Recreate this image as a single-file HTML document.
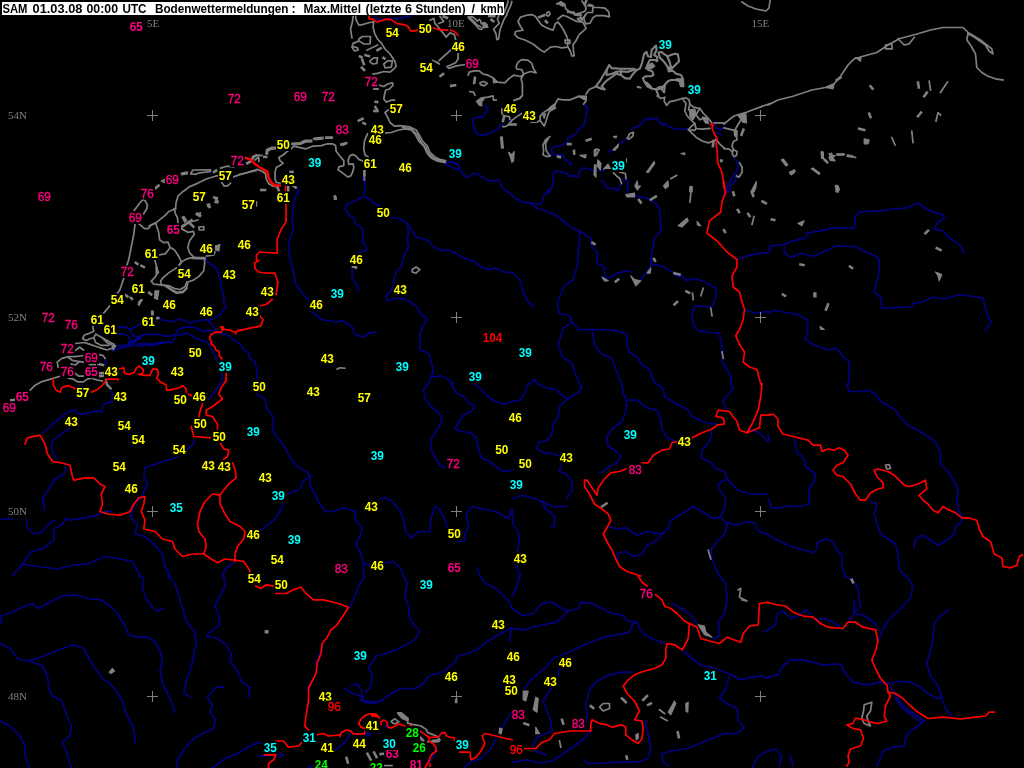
<!DOCTYPE html>
<html><head><meta charset="utf-8"><title>Bodenwettermeldungen</title>
<style>
html,body{margin:0;padding:0;background:#000;overflow:hidden}
svg{display:block}
.n{font-family:"Liberation Sans",Arial,sans-serif;font-weight:bold;font-size:12.6px}
.t{font-family:"Liberation Sans",Arial,sans-serif;font-weight:bold;font-size:12.6px;fill:#000}
.g{font-family:"Liberation Serif","Times New Roman",serif;font-size:11px;fill:#808080}
.l{fill:none;stroke-width:1.7;stroke-linejoin:round;stroke-linecap:square}
</style></head><body>
<svg width="1024" height="768" viewBox="0 0 1024 768">
<rect width="1024" height="768" fill="#000"/>
<g class="l" stroke="#000080">
<polyline points="375.6,15.2 376.2,19 380,20 390,19 400,18.4 411.9,15.5"/>
<polyline points="363.8,175.6 363.1,178.8 365,180.6"/>
<polyline points="445,162.5 452.5,161.9 458.1,164.4 459.4,168.8 465,176.2 468,177.5"/>
<polyline points="445,163.8 452.5,167.5 457.5,170"/>
<polyline points="584.9,104.6 588,110"/>
<polyline points="485.5,105.9 488,109.6"/>
<polyline points="608.5,152.2 612.2,149.8"/>
<polyline points="619.1,144.1 626.6,138.5"/>
<polyline points="631.6,129.8 633.5,127.9 639.8,125.4 644.1,120.4 647.2,118.5 652.2,119.1 656.6,117.9 658.5,121 662.2,124.8 666,124.1 669.8,127.2 676,129.1 683.5,129.5 687.9,128.8"/>
<polyline points="599.1,171 604.8,169.8"/>
<polyline points="601.6,181 604.1,182.2 605.4,186 608.5,188.5 613.5,187.9 616.6,191 619.1,189.1 620.4,184.8"/>
<polyline points="623.5,179.8 627.9,181 627.2,192"/>
<polyline points="714.8,124.1 716,128.5 719.8,129.8 724,127.2"/>
<polyline points="716.6,132.2 721,134.8"/>
<polyline points="734.6,157.2 736.5,161 738.4,164.8 736.5,171 733.4,176 730.2,181 726.5,187.2 727.1,192"/>
<polyline points="737.1,174.8 735.2,181 730.9,184.8 728.4,192"/>
<polyline points="205,257.5 208.8,263.2 215,267 220,277 221.2,287 223.8,297 224,300"/>
<polyline points="296.2,186.9 298.1,190 298.8,192.5"/>
<polyline points="363.8,175.6 363.1,180"/>
<polyline points="297.2,192 293.5,204.5 292.2,217 293.5,229.5 288.5,242 289.8,257 293.5,272 296,284.5 303.5,294.5 309.8,302"/>
<polyline points="312.2,312 321,319.5 336,322 343.5,320.8 352.2,327 354.8,334.5 363.5,337 368.5,333.2 376,332"/>
<polyline points="352.2,268.2 352.2,278.2 356,283.2 358.5,290.8"/>
<polyline points="391,217 401,219.5 407.2,223.2 408.5,232 407.2,239.5 408.5,247 403.5,257 401,267 396,272 393.5,282 391,290.8 386,295.8 387.2,300.8 396,298.2 406,299.5 416,305.8 421,314.5 427.2,319.5 422.2,327 419.8,334.5 419.8,349.5 428.5,353.2 431,360.8 433.5,372 431,377 428.5,384"/>
<polyline points="407.2,223.2 416,237 428.5,240.8 433.5,247 441,250.8 447.2,249.5 456,253.2 463.5,258.2 473.5,260.8 481,267 488.5,269.5 496,268.2 503.5,272 512,272.5"/>
<polyline points="431,377 441,375.8 448.5,379.5 453.5,384"/>
<polyline points="507.2,192 512,194.5"/>
<polyline points="512,195.8 522,202 530.8,203.2 537,208.2 545.8,210.8 557,215.8 564.5,222 572,228.2 579.5,230.8 590.8,238.2 592,247 597,252 597,263.2 604.5,267 604.5,275.8 608.2,278.2 617,273.2 627,270.8 630.8,272"/>
<polyline points="640.8,279.5 647,272 650.8,265.8 652,262"/>
<polyline points="530.8,203.2 540.8,204.5 544.5,194.5 549.5,192"/>
<polyline points="625.8,194.5 634.5,195.8 647,198.2 655.8,203.2 659.5,209.5 660.8,224.5 660.8,230.8 654.5,238.2 652,252 650.8,262 652,264.5 662,265.8 672,272 678.2,277 682,275.8 687,280.8 694.5,278.2 704.5,282 715.8,288.2 715.8,297 712,307 694.5,305.8 692,314.5 693.2,324.5 698.2,330.8 709.5,332.5 719.5,333.2 720.8,342 723.2,352 722,362 727,369.5 730.8,377 730.8,384"/>
<polyline points="579.5,230.8 579.5,242 578.2,254.5 577,267 573.2,279.5 564.5,285.8 559.5,297 557,304.5 559.5,313.2 569.5,315.8 572,322 578.2,329.5 592,329.5 604.5,329.5 617,330.8 627,334.5 627,344.5 629.5,352 637,357 642,364.5 649.5,369.5 652,377 655.8,384"/>
<polyline points="572,322 563.2,328.2 558.2,344.5 562,357 572,363.2 575.8,374.5 579.5,384"/>
<polyline points="592,329.5 594.5,344.5 602,354.5 612,358.2 615.8,369.5 622,384"/>
<polyline points="512,272 519.5,279.5 523.2,292 528.2,302 533.2,306.5"/>
<polyline points="529.5,384 534.5,379.5 538.2,384"/>
<polyline points="738.2,259.5 747,255.8 759.5,253.2 768,253.2"/>
<polyline points="745.8,309.5 754.5,313.2 768,311.5"/>
<polyline points="724.5,192 723.2,197"/>
<polyline points="768,253.2 770.5,245.8 784.2,244.5 793,240.8 805.5,238.2 806.8,233.2 820.5,230.8 833,228.2 854.2,228.2 855.5,217 859.2,212 880.5,210.8 893,209 905.5,208.2 918,203.2 925.5,208.2 933,212 943,214.5 944.2,218.2 938,222 934.2,229.5 943,230.8 948,237 954.2,240.8 960.5,245.8 964.2,253.2"/>
<polyline points="784.2,244.5 784.2,252 790.5,257.5 800.5,253.2 813,256.5 823,252 836.8,245.8 855.5,246.5 863,250.8 873,254.5 879.2,259 879.2,272 876.8,282 874.2,292 880.5,297 881.8,308.2 898,307.5 911.8,307 913,303.2 923,302 931.8,297 943,299 960.5,294.5 973,296.5 983,298.2 985.5,308.2 988,317 991.2,322 985.5,330"/>
<polyline points="768,313.2 774.2,310 785.5,312.5 798,314.5 806.8,319.5 808,328.2 805.5,339.5 813,344.5 828,350 835.5,348.2 843,355.8 849.2,362 849.2,374.5 848.5,384"/>
<polyline points="66.2,466.5 63.8,474 53.8,480.2 48.8,489 42.5,499 45,510.2"/>
<polyline points="220,384 215,391.5 208.8,399"/>
<polyline points="195,440.2 191.2,446.5 183.8,452.8 175,457.8 162.5,461.5 152.5,465.2 145,467.8 143.8,476.5 147.5,484 143.8,491.5 142.5,496.5 136.2,501.5 132.5,509 130,516.5 137.5,524 135,534 145,536.5 156.2,546.5 162.5,554 165,566.5 170,576"/>
<polyline points="1.2,519 12.5,519"/>
<polyline points="26.2,519 27.5,527.8 33.8,534 42.5,531.5 50,522.8 55,520.2"/>
<polyline points="66.2,517.8 62.5,524 53.8,529 53.8,540.2 42.5,549 31.2,551.5 22.5,564 12.5,576"/>
<polyline points="66.2,517.8 70,520.2 85,517.8 97.5,515.2 105,511.5 111.2,511.5"/>
<polyline points="22.5,564 37.5,566.5 57.5,569 72.5,565.2 87.5,564 105,556.5 120,559 132.5,561.5 140,576"/>
<polyline points="235,561.5 225,569 222.5,576"/>
<polyline points="256,394 264.8,399 267.2,409 272.2,415.2 273.5,424 272.2,430.2 278.5,439 286,449 289.8,457.8 297.2,466.5 306,471.5 309.8,475.2 309.8,484 313.5,491.5 318.5,501.5 326,511.5 333.5,511.5 343.5,507.8 352.2,510.2 356,511.5"/>
<polyline points="379.8,499 386,497.8 393.5,502.8 399.8,510.2 403.5,519 406,531.5 411,537.8 418.5,531.5 429.8,531.5 431,519 434.8,506.5 438.5,507.8 443.5,516.5 447.2,526.5"/>
<polyline points="354.8,511.5 356,521.5 362.2,527.8 359.8,536.5 356,544 361,554 363.5,564 363.5,576"/>
<polyline points="309.8,475.2 302.2,482.8 299.8,489 288.5,494"/>
<polyline points="283.5,501.5 281,509 274.8,519 267.2,525.2 261,530.2"/>
<polyline points="363.5,564 371,565.2 386,562.8 393.5,561.5 401,569 403.5,576"/>
<polyline points="428.5,384 423.5,389 424.8,397.8 431,406.5 439.8,414 442.2,421.5 436,431.5 431,439 431,449 436,459 439.8,465.2 446,467.8"/>
<polyline points="451,384 456,392.8 463.5,396.5 468.5,402.8 474.8,406.5 471,411.5 463.5,415.2 458.5,422.8 454.8,429 461,431.5 471,432.8 476,437.8 478.5,449 481,457.8 489.8,461.5 497.2,467.8 503.5,471.5 512,470.2"/>
<polyline points="474.8,384 481,389 487.2,396.5 496,401.5 503.5,404 512,401.5"/>
<polyline points="512,509 508.5,519 496,511.5 482.2,509 472.2,506.5 466,514 468.5,526.5 464.8,534 464.8,541.5 458.5,541.5"/>
<polyline points="477.2,567.8 479.8,576"/>
<polyline points="512,401.5 519.5,400.2 524.5,394 528.2,384"/>
<polyline points="538.2,384 545.8,387.8 555.8,389 562,395.2 567,399 578.2,392.8 582,386.5 579.5,384"/>
<polyline points="567,399 559.5,406.5 558.2,416.5 553.2,424 552,434 547,440.2 538.2,442.8 537,449 544.5,452.8 554.5,454 559.5,456.5"/>
<polyline points="560.8,465.2 559.5,471.5 565.8,474 572,481.5 572,491.5 568.2,495.2 567,499"/>
<polyline points="512,499 522,495.2 532,497.8 542,501.5 552,506.5 562,506.5 567,506"/>
<polyline points="542,501.5 545.8,509 554.5,516.5 554.5,526.5 550.8,526.5"/>
<polyline points="512,509 513.2,524 518.2,531.5 519.5,541.5 517,551.5"/>
<polyline points="517,566.5 520.8,576"/>
<polyline points="622,384 623.2,394 627,400.2 625.8,411.5 622,421.5 612,429 607,436.5 608.2,446.5 617,451.5 620.8,456.5 617,462.8 609.5,466.5 600.8,472.8"/>
<polyline points="627,400.2 637,400.2 647,407.8 657,410.2 660.8,419 662,429 667,437.8 675.8,441.5"/>
<polyline points="657,384 663.2,389 664.5,396.5 674.5,402.8 687,409 692,416.5 702,421.5 712,424 717,424"/>
<polyline points="732,384 733.2,389 724.5,397.8 723.2,401.5 727,410.2"/>
<polyline points="712,431.5 709.5,441.5 702,450.2 700.8,457.8 712,462.8 714.5,467.8 724.5,471.5 728.2,480.2 732,484 738.2,490.2 749.5,494 759.5,494 768,494"/>
<polyline points="749.5,429 759.5,432.8 768,441.5"/>
<polyline points="608.2,526.5 617,529 625.8,527.8 637,535.2 647,531.5 662,534 668.2,529 670.8,520.2 682,514 693.2,506.5 702,511.5 712,517.8 719.5,517.8 724.5,509 725.8,499 719.5,489 718.2,484 727,479"/>
<polyline points="722,517.8 727,525.2 724.5,534 717,541.5 710.8,550.2 712,559 715.8,569 719.5,576"/>
<polyline points="727,522.8 737,525.2 747,521.5 754.5,522.8 757,529 762,532.8 768,534"/>
<polyline points="662,534 657,540.2 647,545.2 642,554 634.5,556.5 624.5,551.5 617,554 618.2,559"/>
<polyline points="846.8,384 849.2,391.5 860.5,391.5 868,390.2 875.5,394 880.5,401.5 888,405.2 895.5,410.2 900.5,417.8 908,425.2 918,430.2 928,436.5 935.5,441.5 940.5,454 940.5,464 948,471.5 954.2,481.5 958,489 956.8,501.5 958,509 961.8,516.5 961.8,521.5 955.5,526.5 954.2,534 946.8,540.2 938,545.2 930.5,540.2 923,535.2 915.5,539 913.8,547.8"/>
<polyline points="794.2,439 796.8,451.5 804.2,459 805.5,466.5 815.5,474 814.2,481.5 809.2,489 809.2,504 800.5,506.5 788,506 778,507.8 771.8,507.8 768,497.8"/>
<polyline points="870.5,501.5 876.8,504 874.2,514 878,526.5 880.5,534 888,539 895.5,544 898,554 899.2,569 905.5,576"/>
<polyline points="768,535.2 778,540.2 788,545.2 800.5,549 813,552.8 816.8,549 816.8,542.8 825.5,539 833,541.5 836.8,550.2 841.8,555.2 841.8,566.5 845.5,576"/>
<polyline points="768,435.2 769.2,440.2"/>
<polyline points="1.2,623.5 1.2,616 12.5,612.2 25,606 32.5,603.5 37.5,608.5 52.5,601 62.5,596 75,594.8 87.5,598.5 101.2,599.8 110,606 117.5,613.5 123.8,623.5 128.8,634.8 137.5,637.2 147.5,637.2 155,641 160,651 162.5,661 160,671 162.5,683.5 167.5,693.5 172.5,704.8 175,712.2"/>
<polyline points="0,643.5 10,648.5 17.5,658.5 25,661 37.5,658.5 50,653.5 62.5,648.5 73.8,644.8 83.8,648.5 88.8,658.5 96.2,669.8 102.5,678.5 110,683.5 116.2,691 122.5,701 126.2,713.5 132.5,726 135,736 135,742.2"/>
<polyline points="30,661 42.5,666 47.5,676 48.8,688.5 52.5,696 61.2,699.8 66.2,713.5 71.2,726 70,736 62.5,742.2 66.2,751 71.2,768"/>
<polyline points="0,721 10,726 20,736 25,746 25,756 30,768"/>
<polyline points="138.8,576 143.8,578.5 142.5,588.5 146.2,598.5 152.5,607.2 157.5,611 162.5,608.5"/>
<polyline points="167.5,576 175,583.5 178.8,596 182.5,608.5 186.2,621 195,632.2 196.2,643.5 193.8,653.5 191.2,668.5 186.2,681 183.8,693.5 190,697.2"/>
<polyline points="223.8,576 225,586 220,596 215,606 218.8,616 220,624.8 212.5,629.8 206.2,636 217.5,638.5 226.2,644.8 231.2,653.5 230,661 237.5,671 241.2,681 248.8,687.2 250,697.2"/>
<polyline points="223.8,687.2 216.2,687.2 207.5,697.2 212.5,704.8 210,712.2 215,719.8 213.8,728.5 202.5,733.5 192.5,739.8 183.8,749.8 177.5,759.8 176.2,768"/>
<polyline points="212.5,768 225,758.5 237.5,753.5 247.5,747.2 256,743.5"/>
<polyline points="364.8,576 358.5,586 354.8,596 349.8,607.2"/>
<polyline points="403.5,576 407.2,583.5 404.8,596 408.5,607.2 409.8,618.5 414.8,626 419.8,631 414.8,639.8 406,644.8 396,649.8 386,653.5 376,656 373.5,661 368.5,667.2 372.2,676 371,686 366,692.2"/>
<polyline points="344.8,688.5 352.2,693.5 361,696 363.5,701 373.5,702.2 381,701 391,693.5 401,688.5 416,688.5 423.5,683.5 428.5,676 441,672.2 446,669.8 456,661 457.2,656 468.5,653.5 478.5,648.5 486,642.2 496,636 506,631 512,627.2"/>
<polyline points="351,686 357.2,683.5 361,689.8 363.5,698.5"/>
<polyline points="322.2,643.5 319.8,653.5 316,663.5"/>
<polyline points="312.2,681 307.2,688.5"/>
<polyline points="479.8,576 486,583.5 496,588.5 503.5,596 509.8,602.2 512,608.5"/>
<polyline points="511,628.5 509.8,641"/>
<polyline points="512,711 506,721 502.2,728.5"/>
<polyline points="349.8,733.5 346,741 338.5,747.2 333.5,751"/>
<polyline points="256,743.5 261,742.2"/>
<polyline points="258.5,756 266,756 276,753.5 283.5,754.8 279.8,757.2"/>
<polyline points="367.2,732.2 368.5,736"/>
<polyline points="436,748.5 433.5,756 428.5,763.5"/>
<polyline points="496,738.5 491,748.5 481,758.5 468.5,763.5 463.5,768"/>
<polyline points="308.5,768 316,764.8"/>
<polyline points="519.5,576 517,586 512,596"/>
<polyline points="512,608.5 523.2,616 533.2,613.5 542,603.5 552,602.2 559.5,607.2 568.2,611 578.2,608.5 580.8,602.2 592,603.5 599.5,607.2 612,613.5 622,614.8 628.2,621 637,622.2 639.5,628.5 644.5,634.8 654.5,639.8 664.5,643.5"/>
<polyline points="512,628.5 524.5,629.8 537,626 557,622.2 568.2,611"/>
<polyline points="524.5,688.5 532,678.5 544.5,668.5 553.2,658.5 572,651 587,643.5 604.5,637.2 617,634.8 629.5,632.2 632,624.8 637,622.2"/>
<polyline points="559.5,669.8 555.8,681 549.5,691 543.2,701 547,711 550.8,721 552,731 537,737.2 533.2,746 534.5,751 545.8,754.8"/>
<polyline points="632,672.2 622,672.2 609.5,674.8 597,681 589.5,689.8 585.8,703.5 587,716 585.8,723.5"/>
<polyline points="590.8,731 584.5,738.5 574.5,746 562,754.8 552,761 539.5,763 527,759.8 512,762.2"/>
<polyline points="644.5,721 648.2,733.5 650.8,748.5 648.2,758.5 637,762.2 619.5,762.2 599.5,763.5 587,763.5 584.5,759.8"/>
<polyline points="719.5,576 725.8,583.5 727,601 724.5,613.5 718.2,622.2 719.5,636 714.5,638.5"/>
<polyline points="672,603.5 679.5,607.2 689.5,613.5 697,623.5"/>
<polyline points="682,649.8 692,658.5 702,666 712,667.2 724.5,672.2 732,674.8 739.5,679.8 752,677.2 762,676 768,678.5"/>
<polyline points="729.5,676 725.8,688.5 719.5,698.5 727,703.5 737,708.5 738.2,721 744.5,727.2 737,733.5 724.5,733.5 712,738.5 699.5,743.5 687,748.5 672,751 662,753.5 663.2,762.2 668.2,766"/>
<polyline points="768,751 758.2,756 752,768"/>
<polyline points="763.2,632.2 768,629.8"/>
<polyline points="768,629.8 775.5,624.8 778,613.5 783,611 790.5,618.5 798,616 806.8,609.8 810.5,614.8"/>
<polyline points="845.5,576 853,581 858,588.5 859.2,601 860.5,607.2 854.2,612.2 854.2,601"/>
<polyline points="854.2,613.5 848,622.2"/>
<polyline points="818,619.8 825.5,618.5 833,622.2 839.2,626"/>
<polyline points="854.2,613.5 863,614.8 870.5,619.8 875.5,623.5 876.8,629.8"/>
<polyline points="906.8,576 913,586 910.5,597.2 903,606 895.5,613.5 888,621 883,628.5 879.2,638.5"/>
<polyline points="768,677.2 778,674.8 783,666 790.5,659.8 800.5,659.8 813,662.2 821.8,664.8 840.5,664 845.5,673.5 853,682.2 868,684.8 879.2,682.2 888,683.5 900.5,681 910.5,682.2 920.5,687.2 928,693.5 938,698.5 941.8,697.2"/>
<polyline points="948,609.8 940.5,616 934.2,623.5 933,638.5 930.5,651 926.8,663.5 930.5,676 938,686 941.8,698.5 945.5,708.5 951.8,716"/>
<polyline points="888,683.5 895.5,693.5 900.5,703.5 908,709.8 918,716 924.2,721 918,726 910.5,731 905.5,738.5 904.2,746 893,747.2 883,751 879.2,761 876.8,766"/>
<polyline points="895.5,698.5 903,708.5 913,716 920.5,722.2"/>
<polyline points="768,751 775.5,748.5 781.8,756 779.2,766"/>
<polyline points="790.5,756 793,766"/>
<polyline points="360.6,700 365,702.5 375,703.1 382.5,700"/>
<polyline points="365.6,733.8 368.8,736.2 370.6,732.8"/>
<polyline points="384.4,724.4 386.9,727.5"/>
<polyline points="485.5,105.4 488,107.9 486.8,111.6 484.2,114.1 483,117.2 478,117.2 473,118.5 473,123.5 474.9,129.8 476.8,133.5 480.5,134.8 486.8,134.8 491.8,131.6 497.4,129.8 500.5,124.8 503,125.4"/>
<polyline points="508.6,119.8 509.9,121"/>
<polyline points="584.9,104.8 588,108.5 586.1,114.8 584.9,121 583.6,126 578.6,129.1 574.9,134.8 568,137.9 567.4,142.2 560.5,146 555.5,146 551.1,149.8 552.4,154.1 558,154.8 563,154.8 564.9,159.8 570.5,162.9 570.5,165.4"/>
<polyline points="594.2,171 588,168.5 583,167.9 579.2,171 578,177.2 574.2,175.4 569.2,176.6 567.4,173.5 560.5,171.6 555.5,171 552.4,174.8 553.6,182.2 551.8,188.5 546.8,192"/>
<polyline points="468,177.2 471.8,174.1 476.8,173.5 481.8,176.6 486.8,179.8 492.4,181 498,179.8 501.1,183.5 501.8,187.2 505.5,190.4 508,192"/>
<polyline points="105,359.4 105.9,364.1"/>
<polyline points="111.6,390.3 112.5,396.9 111.6,401.6 105,403.4 102.2,407.2 102.2,411.9 95.6,410.9 90,412.8 82.5,413.8 77.8,413.8 75.9,410 68.4,411.9 61.9,416.6 54.4,422.2 48.8,427.8 42.2,433.4"/>
<polyline points="69.4,428.8 61.9,433.4 54.4,439.1 51.6,443.8 52.5,451.2 56.2,458.8"/>
<polyline points="365,180 365,187.5 363.8,196.2 370,199.4 373.1,203.1 379.4,205.6"/>
<polyline points="363.8,196.2 357.5,200 351.2,202.5 346.2,205 345.6,209.4 348.8,215 353.8,218.1 355,223.1 360,226.2 363.1,230 362.5,240 365,245 366.9,250 360,251.9"/>
<polyline points="118.2,326.9 125.8,326.9 129.5,329.4 134.5,327.5 140.1,324.4"/>
<polyline points="158.2,316.9 161.4,320 167,320.6 173.2,321.9 179.5,318.8 184.5,320.6 189.5,323.1 194.5,321.9 200.8,320 207,320 210.8,320 215.8,316.9 220.8,313.8 223.2,310 225.8,306.9 223.9,302.5 223.9,300"/>
<polyline points="208.2,320.6 212,325 215.8,329.4 213.2,331.2 208.2,330 204.5,331.9 199.5,329.4 194.5,327.5 189.5,326.9 183.2,327.5 178.2,329.4 176.4,333.8 172,335.6 167,336.2 159.5,335 153.2,334.4 147,334.4 140.8,335.6 137,336.9 133.2,336.2 130.8,331.2 129.5,329.4"/>
<polyline points="118.2,333.8 124.5,333.8 128.2,336.2 130.8,340 129.5,343.1"/>
<polyline points="215.8,330 219.5,333.1 223.9,333.8 229.5,335.6 232.6,339.4 237,341.9 240,343.8"/>
<polyline points="240,343.8 243.8,349.5 249,353.4 250,359 254.7,361 256.6,369.4 257.5,378.8"/>
<polyline points="112,346.2 119.5,345.6 128.2,345 134.5,343.1 137,340 140.8,336.9"/>
<polyline points="129.5,343.1 140.1,338.1" stroke-width="3"/>
<polyline points="138.9,343.8 144.5,343.8 153.2,343.8 159.5,342.5 167,341.9 172,342.5 174.5,338.8 176.4,335.6 182,334.4 187,333.1 192,335.6 197,338.8 202,340.6 205.8,341.2 209.5,344.4 212,350 214.5,355 217,360 218.2,361.9"/>
<polyline points="112,351.2 117,348.8 123.2,347.5 129.5,346.2 137,345 142,346.2 148.2,345 154.5,345.6 158.2,344 163.2,343.1 167,342.5"/>
<polyline points="219,367 221,372 222.5,377 221,384"/>
</g>
<g class="l" stroke="#808080">
<polyline points="353.1,16.8 352.5,21.5 350.6,29 351.9,37.8"/>
<polyline points="355.6,16.5 356.2,20.2 358.8,25.2 362.5,24.6 368.8,22.8 373.8,21.5 373.1,26.5 374.4,32.8 377.5,39 381.2,42.8 385,49 390,54 395,61.5 396.2,66.5 393.8,69 390,72.1 383.8,71.5 377.5,73.4 373.1,74"/>
<polygon points="358.8,39 362.5,36.5 370.6,36.5 370,44 363.8,44 358.8,40.9"/>
<polyline points="358.8,40.9 353.1,43.4 351.9,47.1 354.4,50.9 358.1,50.2 357.5,47.8 353.8,46.8"/>
<polyline points="366.9,50.2 377.5,45.2"/>
<polyline points="377.5,50.2 380.6,48.4" stroke-width="2.6"/>
<polyline points="360,56.5 361.5,57.1" stroke-width="2.6"/>
<polyline points="365.6,55.2 368.8,56.2" stroke-width="2.6"/>
<polyline points="383.5,57.8 384.4,58.4" stroke-width="2.6"/>
<polyline points="362.2,59.6 363.8,64" stroke-width="2.6"/>
<polyline points="361.9,67.8 364.4,70.2 363.1,69" stroke-width="2.6"/>
<polygon points="370,60.9 373.8,57.8 377.5,57.8 376.9,63.4 373.1,64 370,62.1"/>
<polygon points="383.8,64 387.5,60.9 392.5,60.9 391.2,67.1 385,67.8"/>
<polyline points="379.4,85.2 383.8,86.5 387.5,84 392.5,82.8 393.1,85.2 389.4,89 385.6,90.2 384.4,95.2 383.8,99 386.2,102.1 391.2,100.2 394.4,100.2"/>
<polyline points="374.4,88.6 377.5,88.6" stroke-width="2.6"/>
<polyline points="375.6,101.9 377.2,102.1" stroke-width="2.6"/>
<polyline points="375.4,107.1 376.6,109" stroke-width="2.6"/>
<polyline points="430,20.2 433.8,18.4 435,23.4 438.8,27.8 446.2,37.1 450,32.8 454.4,34.6 455.6,39.6"/>
<polyline points="440,16.5 443.8,21.5 438.8,23.4"/>
<polyline points="443.8,16.5 446.9,17.8" stroke-width="2.6"/>
<polyline points="439.4,60.2 450.6,50.2"/>
<polyline points="433.1,60.5 439.4,64 437.5,62.1"/>
<polyline points="458.1,53.4 458.1,59 455.6,62.8 450,65.2 446.9,66.5 448.8,68.4 456.2,65.9 465,64.6"/>
<polyline points="440.6,75.9 443.1,74" stroke-width="2.6"/>
<polyline points="451.2,85.9 455,85.2" stroke-width="2.6"/>
<polyline points="388.1,110 385,112.5 387.5,116.9 390,122.5 394.4,126.2 400,125.6 410,126.9 416.2,130 420,136.2 422.5,141.2 427.5,146.2 430,152.5 435,156.9 440,159.4 445.6,160.6"/>
<polyline points="385,133.1 391.2,132.5 398.8,130 405,128.8 411.2,130 415.6,135 418.8,141.2 423.8,146.2 427.5,153.8 431.2,158.1 437.5,161.2 445,162.5"/>
<polyline points="402.5,127.5 411.2,128.5 417.5,135 421.2,142.5 426.2,147.5 428.8,153.8 433.8,158.1 440,160.6 445,161.5"/>
<polyline points="358.8,120.6 362.5,118.8" stroke-width="2.6"/>
<polyline points="363.5,123.1 365,123.8" stroke-width="2.6"/>
<polyline points="374.4,111 377.5,111" stroke-width="2.6"/>
<polyline points="341.2,144.4 346.2,143.1" stroke-width="2.6"/>
<polyline points="364.4,170 364.4,180"/>
<polyline points="499.2,15.2 497.4,19 499.2,23.4 493.6,29 496.1,34 496.8,39.6 498.6,39 499.9,30.2 503.6,20.2 506.8,14.6"/>
<polygon points="526.8,15.2 520.5,17.1 518,21.5 520.5,26.5 523,30.2 515.5,31.5 514.9,34.6 518,37.8 525.5,40.2 533,44 539.2,49 544.2,52.1 550.5,47.1 555.5,46.5 561.8,47.8 567.4,47.1 568,40.9 566.8,36.5 563,29 560.5,25.2 558,22.1 555.5,23.4 554.2,27.1 553,30.2 548,28.4 541.8,25.2 538,20.2 535.5,16.5 531.8,14.6"/>
<polyline points="539.2,17.1 544.2,15.2" stroke-width="2.6"/>
<polyline points="545.8,21.2 547,22.5" stroke-width="2.6"/>
<polyline points="558,19 561.1,16.5 563,15.2 566.8,16.5 571.8,19 576.8,21.5 583,22.1 586.1,28.4 579.2,34.6 575.5,41.5 573,44.6 573.6,51.5 574.2,55.9 571.8,55.9 570.5,51.5 568,47.1"/>
<polygon points="564.9,40.2 569.9,40.2 569.9,43.4 565.5,43.4"/>
<polyline points="575.5,14.6 580.5,15.2" stroke-width="2.6"/>
<polyline points="578,19 583,17.8 585.5,15.2"/>
<polygon points="516.8,69 516.1,66.5 518,62.1 521.8,59.6 528,60.2 531.8,63.4 533.6,69 536.1,72.8 530.5,71.5 526.8,72.8 523.6,74 521.8,69.6"/>
<polyline points="468,75.2 469.2,72.1 474.2,70.9 479.2,70.9 483,74 488,75.2 493,77.8 497.4,82.1 504.9,82.8 509.2,78.4 513.6,75.2 520.5,76.5 523.6,74.6"/>
<polyline points="523,75.2 521.1,79 522.4,84 522.4,95.2 519.9,98.4 514.2,100.2"/>
<polygon points="493,77.8 497.4,82.1 493.6,82.8" fill="#808080" stroke-width="1.2"/>
<polyline points="474.9,77.8 474.2,82.8" stroke-width="2.6"/>
<polygon points="479.9,82.8 483.6,81.5 487.4,83.4 484.2,85.9 480.5,84.6"/>
<polyline points="469.9,91.5 473.6,92.1 474.9,95.2"/>
<polyline points="476.8,101.5 481.8,97.8 488,97.1 493,95.9 493.6,100.2 496.1,100.2"/>
<polygon points="476.8,101.5 481.8,97.8 484.2,99 481.8,101.5 481.8,105.9 479.2,105.2" fill="#808080" stroke-width="1.2"/>
<polyline points="586.1,94 589.2,89.6 596,86.5"/>
<polygon points="596,86.2 599.8,81.2 603.5,75 606.6,70 609.1,65 611.6,68.1 621,68.8 633.5,68.8 636.6,70 632.2,75 629.8,78.8 624.8,78.1 621,75 616,73.8 611,77.5 606,81.2 601.6,86.2 604.8,89.4 601,88.8" stroke-width="2.1"/>
<polyline points="606.6,70 606.6,75 612.2,73.8 616,71.9 621,71.2 621,75" stroke-width="2.1"/>
<polyline points="621,71.2 627.2,71.9 633.5,70" stroke-width="2.1"/>
<polyline points="636.6,70 639.8,68.8 642.2,62.5 644.1,53.8 646.6,51.9 647.9,56.2 651,56.9 651.6,50 656,45.6 656.6,50 654.1,55 657.2,56.9 657.2,61.2 654.8,60 649.8,60 648.5,62.5 646,68.1 648.5,70 652.2,71.2 653.5,75 651,76.2 646,76.2 642.9,78.1 644.1,81.2 647.2,86.2 652.2,88.8 657.2,89.4 661,88.1 663.5,86.2 667.9,81.2 671,80 676,80 679.8,81.2 681,86.2 683.5,86.2 682.9,78.8 681,75 676,73.8 673.5,71.2 669.8,70 672.2,68.1 679.1,61.2 677.9,54.4 674.8,53.8 667.2,56.2 661,51.9 658.5,52.5 659.8,57.5 663.5,61.2 667.2,66.2 669.8,70" stroke-width="2.1"/>
<polygon points="646,68.1 649.1,64.4 652.2,63.1 654.8,66.2 651,68.8" fill="#808080" stroke-width="1.2"/>
<polygon points="676,78.8 682.9,78.8 683.5,86.2 681,86.2 679.1,81.2" fill="#808080" stroke-width="1.2"/>
<polygon points="644.1,81.2 647.2,86.2 652.2,88.8 651,86.2 647.2,82.5" fill="#808080" stroke-width="1.2"/>
<polygon points="657.2,87.5 661,86.2 664.1,87.5 661,89.4" fill="#808080" stroke-width="1.2"/>
<polygon points="667.2,67.5 671,66.2 672.2,71.2 668.5,71.9" fill="#808080" stroke-width="1.2"/>
<polyline points="661,88.1 664.1,92.5 664.8,86.2" stroke-width="2.1"/>
<polyline points="656,89.4 658.5,96" stroke-width="2.1"/>
<polyline points="637.9,86.9 640.4,87.5" stroke-width="2.1"/>
<polyline points="667.2,56.2 669.8,62.5 671,66.9" stroke-width="2.1"/>
<polyline points="657.2,96 661,98.5 664.8,97.2 664.1,101 666.6,105.4 669.8,101.6 676,100.4 682.2,98.5 686,97.9 689.1,99.8 689.8,104.1 693.5,107.2 699.8,108.5 703.5,113.5 708.5,118.5 711.6,122.9"/>
<polyline points="682.2,98.5 686,103.5 684.8,111 687.2,116 691,119.8 694.8,123.5 691,126.6 688.5,129.8 691,132.2 696,137.2 702.2,141 708.5,142.9 713.5,141 716.6,139.8"/>
<polygon points="689.8,109.8 694.8,109.1 696,114.8 692.9,119.8 689.8,116" fill="#808080" stroke-width="1.2"/>
<polygon points="702.2,117.2 707.2,117.9 708.5,123.5 705.4,122.9" fill="#808080" stroke-width="1.2"/>
<polyline points="689.8,104.1 688.5,109.8 696,114.8 699.8,108.5"/>
<polyline points="696,114.8 699.8,119.8 703.5,118.5"/>
<polyline points="694.8,123.5 696,128.5 702.2,129.1 709.8,128.5"/>
<polyline points="688.5,129.8 694.8,130.4 696,128.5"/>
<polyline points="714.1,122.9 724,122.9"/>
<polyline points="716,139.1 719.8,144.1 724,147.9"/>
<polyline points="713.5,141 712.9,146" stroke-width="2.6"/>
<polygon points="612.9,149.8 618.5,144.1 617.9,147.2 614.8,150.4" fill="#808080" stroke-width="1.2"/>
<polygon points="627.2,138.5 629.8,133.5 633.5,132.2 632.9,136 629.1,139.1"/>
<polygon points="613.5,136.6 616.6,136 616,137.9" fill="#808080" stroke-width="1.2"/>
<polygon points="681,153.5 684.8,152.9 684.5,154.8" fill="#808080" stroke-width="1.2"/>
<polygon points="720.4,159.8 722.2,159.8 722.2,161.6 720.4,161.6" fill="#808080" stroke-width="1.2"/>
<polygon points="646.6,172.2 654.1,161.6 654.8,163.5 648.5,172.5" fill="#808080" stroke-width="1.2"/>
<polyline points="671,178.5 676.6,175.4"/>
<polygon points="663.5,186 667.9,181 668.5,186 665.4,188.5" fill="#808080" stroke-width="1.2"/>
<polygon points="634.8,186 637.2,181 637.9,186 640.4,186 637.2,189.8" fill="#808080" stroke-width="1.2"/>
<polygon points="689.8,186.6 692.2,186.6 692.2,192 689.8,192" fill="#808080" stroke-width="1.2"/>
<polyline points="596,149.1 599.1,149.8 596.6,154.8"/>
<polygon points="597.9,159.8 601,163.5 600.4,169.8 597.2,166" fill="#808080" stroke-width="1.2"/>
<polygon points="603.5,169.1 607.9,164.1 610.4,168.5 604.8,168.5" fill="#808080" stroke-width="1.2"/>
<polyline points="626.6,158.5 626.6,162.2" stroke-width="1"/>
<polyline points="613.5,172.9 616.6,176 619.8,178.5 621.6,183.5"/>
<polyline points="619.8,172.2 625.4,173.5 626,178.5"/>
<polyline points="724,124.1 729,119.8 734,116 740.2,114.1 746.5,112.2 752.8,109.8 761.5,106.6 770.2,103.5"/>
<polyline points="724,127.9 729,129.1 734.6,130.4 736.5,127.2 740.2,121 742.8,116"/>
<polygon points="737.8,114.8 745.9,113.5 746.5,122.9 742.8,122.2 740.2,118.5" fill="#808080" stroke-width="1.2"/>
<polyline points="734.6,130.4 735.9,134.8 737.1,139.8 733.4,141.6 732.1,146 733.4,149.8"/>
<polygon points="734,130.4 737.1,130.4 737.1,136.6 734.6,136" fill="#808080" stroke-width="1.2"/>
<polyline points="724,148.5 729,149.1 731.5,151"/>
<polygon points="733.4,149.8 737.1,151.6 736.5,155.4 734,156.6 732.1,153.5"/>
<polyline points="739.6,162.9 742.1,167.2 742.1,172.2 739,177.2 736.5,176"/>
<polyline points="743.4,129.8 741.5,134.8" stroke-width="2.6"/>
<polygon points="781.5,159.8 783.4,159.1 787.8,164.8 785.9,165.8" fill="#808080" stroke-width="1.2"/>
<polygon points="790.2,174.1 794.6,170.4 794.6,172.2 791.5,174.8" fill="#808080" stroke-width="1.2"/>
<polygon points="750.9,192 754,186 756.5,181.6 755.9,187.2 754,192" fill="#808080" stroke-width="1.2"/>
<polygon points="821.5,152.2 823.4,152.2 823.4,158.5 821.5,158.5" fill="#808080" stroke-width="1.2"/>
<polyline points="824.6,159.8 827.1,162.2" stroke-width="2.6"/>
<polygon points="829,157.2 831.5,152.9 832.8,156 835.2,155.4 832.1,158.5 835.2,161 830.2,160.4" fill="#808080" stroke-width="1.2"/>
<polyline points="837.1,154.5 844,154.1"/>
<polyline points="847.8,156 852,156.6" stroke-width="2.6"/>
<polygon points="811.5,168.5 813.4,168.2 819.6,172.9 819,174.5" fill="#808080" stroke-width="1.2"/>
<polygon points="835.9,185.4 837.8,185.4 839.6,189.8 837.1,192 835.9,192" fill="#808080" stroke-width="1.2"/>
<polyline points="768,105 778,100 793,96.2 811.8,90 825.5,87.5 834.2,83.8 840.5,76.2 848,65 854.2,58.8 863,56.2 876.8,52.5 888,45 899.2,38.8 918,33.8 930.5,30 943,27.5 963,27.5 968,32.5 980.5,40 991.8,48.8 993,53.8 989.2,51.2 985.5,45 973,36.2 968,33.8"/>
<polyline points="968,33.8 966.8,40 970.5,45 975.5,53.8 976.8,67.5 981.8,72.5 988,76.2 995.5,78.8 1003,80"/>
<polygon points="885.5,45 891.8,43.8 892.2,48.8 885.5,48.8"/>
<polyline points="898,38.8 904.2,45 909.2,43.8 914.2,37.5"/>
<polygon points="855.5,57.5 860.5,61.2 861,57.5" fill="#808080" stroke-width="1.2"/>
<polygon points="825.5,87.5 834.2,83.8 833,88.8" fill="#808080" stroke-width="1.2"/>
<polyline points="836.8,80 840.5,77.5" stroke-width="2.6"/>
<polyline points="870.5,86.2 872.5,88.8" stroke-width="2.6"/>
<polyline points="918,82.5 918.8,87.5" stroke-width="2.6"/>
<polyline points="929.2,81.2 930.5,90"/>
<polyline points="924.2,96.2 926.8,92.5" stroke-width="2.6"/>
<polyline points="940.5,92.5 947.5,82"/>
<polyline points="869.2,113.8 870.5,117" stroke-width="2.6"/>
<polyline points="918,116.2 921,112.5" stroke-width="2.6"/>
<polyline points="936,121.2 938,112.5 940.5,115"/>
<polyline points="859.2,128.8 864.2,130" stroke-width="2.6"/>
<polygon points="864.2,138.8 869.2,140 868,143.8 864.2,143.8" fill="#808080" stroke-width="1.2"/>
<polyline points="891.8,137.5 895,145"/>
<polyline points="911.8,131.2 913,142.5"/>
<polyline points="821.8,152.5 822.5,157.5" stroke-width="2.6"/>
<polyline points="829.2,153.8 834.2,160 830.5,158.8"/>
<polyline points="838,154.5 843,154.5" stroke-width="2.6"/>
<polyline points="848,155 855.5,157.5"/>
<polyline points="781.8,160 786.8,165"/>
<polyline points="790.5,172.5 794.2,170.8" stroke-width="2.6"/>
<polyline points="811.8,168.8 819.2,173.2"/>
<polyline points="835.5,186.2 838,192"/>
<polyline points="134.2,210.6 139.2,203.8 143,199.4 145.5,201.2 147.4,205 146.8,208.8 143.6,213.8"/>
<polyline points="155.5,188.1 158.6,185.6" stroke-width="2.6"/>
<polyline points="165.5,179.4 161.5,181 164.9,182.5"/>
<polygon points="181.1,173.1 187.4,171.9 187.4,173.8 181.8,175" fill="#808080" stroke-width="1.2"/>
<polygon points="190.5,173.8 193,170 210.5,169.8 210.5,171.5 198,173.1 196.1,174.4"/>
<polyline points="214.2,171.9 216.1,170.6" stroke-width="2.6"/>
<polyline points="220.5,168.1 226.8,166.2 233.6,166.9"/>
<polyline points="247.4,163.1 251.1,161.2" stroke-width="2.6"/>
<polyline points="252.4,158.8 254.2,156.2 256,155.6" stroke-width="2.6"/>
<polyline points="175.5,208.8 176.1,202.5 178,196.2 181.8,192.5 189.2,186.9 198,183.1 206.8,178.8 215.5,176.2 218.6,175.6"/>
<polyline points="233.6,176.9 240.5,174.4 248,172.5 256,170.6"/>
<polyline points="221.8,182.5 224.2,186.2 228,185.6 230.5,183.1"/>
<polyline points="175.5,208.8 169.2,211.2 164.2,216.2 158,221.2 153,224.4 149.2,226"/>
<polyline points="174.2,208.8 175.5,213.8 177.4,217.5 178,222.5"/>
<polyline points="214.2,197.5 216.8,198.1" stroke-width="2.6"/>
<polyline points="215.5,201.9 217.4,202.2" stroke-width="2.6"/>
<polygon points="207.4,204.4 209.9,203.8 209.9,206.9 208,206.9" fill="#808080" stroke-width="1.2"/>
<polygon points="196.8,214.4 200.5,212.5 199.9,216.2" fill="#808080" stroke-width="1.2"/>
<polyline points="183,217.5 184.9,221.2" stroke-width="2.6"/>
<polyline points="181.8,226 188,222.5 198,220"/>
<polyline points="188,222.5 193,226"/>
<polyline points="135,224.5 133.8,234.5 131.2,247 128.8,259.5 126.2,267"/>
<polyline points="123.8,278.2 120,289.5 115,297"/>
<polyline points="110,305.8 102.5,314.5"/>
<polyline points="197.5,214 200,215.8" stroke-width="2.6"/>
<polyline points="208,205 209.5,207" stroke-width="2.6"/>
<polyline points="215.5,198.2 217,200.8" stroke-width="2.6"/>
<polygon points="198.8,227 203.8,226.5 203.8,230 199.2,230"/>
<polygon points="215.5,245.8 220,244.5 218.8,250.8 215.5,250" fill="#808080" stroke-width="1.2"/>
<polyline points="135.8,262.8 137.5,264" stroke-width="2.6"/>
<polyline points="141.5,265.8 143.8,267" stroke-width="2.6"/>
<polyline points="149.2,292.8 151.2,294.5" stroke-width="2.6"/>
<polygon points="155,290.8 158.8,290.8 157.5,299.5 154.5,298.2" fill="#808080" stroke-width="1.2"/>
<polyline points="125.8,295.2 127.5,296.5" stroke-width="2.6"/>
<polyline points="130.8,297.8 132,299" stroke-width="2.6"/>
<polyline points="140.8,300.8 139,304" stroke-width="2.6"/>
<polyline points="152.5,312 152.5,315.8" stroke-width="2.6"/>
<polygon points="265.6,153.8 266.5,149.4 271.2,147.2 275.6,147.2 275.6,149 271.2,149.4 268.1,151.2 267.5,154.4" fill="#808080" stroke-width="1.2"/>
<polygon points="291.9,143.1 300,142.5 305,140 311.9,140 311.9,141.9 305.6,142.2 300.6,144.4 291.9,144.8" fill="#808080" stroke-width="1.2"/>
<polygon points="313.1,138.8 315,137.8 323.1,137.2 323.1,139 315.6,140" fill="#808080" stroke-width="1.2"/>
<polygon points="325.6,136.9 332.5,136.9 332.5,138.5 325.6,138.5" fill="#808080" stroke-width="1.2"/>
<polygon points="341.9,144.4 346.2,142.5 346.2,144 342.5,145.6" fill="#808080" stroke-width="1.2"/>
<polyline points="291.2,148.8 293.8,146.2 302.5,148.1 306.2,148.8 312.5,146.2 321.2,145.6 327.5,143.8 332.5,143.8 335.6,145.6 336.2,151.2 340,156.2 343.8,160.6 343.8,165.6 338.8,166.9 338.1,170 341.2,171.9 344.4,174.4 347.5,176.9 350.6,176.2 352.5,172.5 353.8,167.5 353.1,163.8 348.8,164.4 348.1,160 350,155.6 353.1,154.4 356.2,156.2 358.8,159.4 363.1,161.2"/>
<polyline points="287.5,151.2 283.1,155 278.8,157.5 280,160.6 283.1,163.1 280,165.6 276.2,167.5 275,172.5 275,178.8 276.2,182.5 280,183.1"/>
<polyline points="240,174.4 245,173.1 251.2,171.2 257.5,169.4 261.9,171.2 265.6,173.8 266.2,178.8 268.8,183.8 273.1,186.2 277.5,186.9"/>
<polyline points="252.5,156.9 257.5,155 261.9,155.6"/>
<polyline points="255,160 258.8,156.9 258.8,161.2"/>
<polyline points="247.5,163.1 250.6,161.2" stroke-width="2.6"/>
<polyline points="264.4,156.9 266.2,156.9" stroke-width="2.6"/>
<polyline points="290.6,171.9 292.5,171.9" stroke-width="2.6"/>
<polyline points="261.2,190 265,190" stroke-width="2.6"/>
<polygon points="334.4,196.9 336.2,196.9 336.2,199.4 334.4,199.4" fill="#808080" stroke-width="1.2"/>
<polyline points="367.5,133.8 364.4,141.2 363.8,148.8 365,155 368,156.9"/>
<polyline points="288.1,186.2 288.1,190.6" stroke-width="2.6"/>
<polyline points="293.8,186.2 295.6,187.5" stroke-width="2.6"/>
<polyline points="277.5,187.5 278.8,190.6" stroke-width="2.6"/>
<polyline points="364.4,170 364.4,175" stroke-width="2.6"/>
<polyline points="256.2,202.5 256.2,206.2" stroke-width="1"/>
<polyline points="334.8,196.5 335.5,198.5" stroke-width="2.6"/>
<polyline points="256,202.5 256,205" stroke-width="2.6"/>
<polygon points="412.2,269.5 416,267 419.8,269.5 416,273.2 412.2,272"/>
<polyline points="353,266.5 356,267.5" stroke-width="2.6"/>
<polyline points="337.2,369 339.8,367.8 344.8,368.2"/>
<polygon points="625.8,194.5 634.5,193.2 634.5,197 627,197" fill="#808080" stroke-width="1.2"/>
<polyline points="639,200 640.8,202.5" stroke-width="2.6"/>
<polyline points="650.8,199.5 655.8,196.5" stroke-width="2.6"/>
<polyline points="690.8,193.2 690,202"/>
<polyline points="733.2,192.5 734,195" stroke-width="2.6"/>
<polyline points="752,192.5 753.2,195.8" stroke-width="2.6"/>
<polyline points="762.5,201.5 765.8,203.2" stroke-width="2.6"/>
<polygon points="678.2,225.8 687,218.2 688.2,220.8 682,227" fill="#808080" stroke-width="1.2"/>
<polygon points="697,221.5 700.8,225.8 697.5,225" fill="#808080" stroke-width="1.2"/>
<polyline points="737.8,210 739,212" stroke-width="2.6"/>
<polyline points="748.2,214 749.5,216" stroke-width="2.6"/>
<polyline points="754,216.5 752,224.5"/>
<polyline points="724,230.2 725,232" stroke-width="2.6"/>
<polyline points="592.5,242.8 594.5,244" stroke-width="2.6"/>
<polygon points="602,277 608.2,280.8 604.5,280.8" fill="#808080" stroke-width="1.2"/>
<polyline points="615.8,281.5 618.2,279.5" stroke-width="2.6"/>
<polygon points="630.8,275.8 635.8,285.8 640.8,280.8 634.5,279.5" fill="#808080" stroke-width="1.2"/>
<polygon points="647,273.2 650.8,268.2 650.2,273.2" fill="#808080" stroke-width="1.2"/>
<polyline points="654,259 655,260.8" stroke-width="2.6"/>
<polyline points="674.5,273.2 679.5,274.5" stroke-width="2.6"/>
<polyline points="686.5,291.5 689,292.8" stroke-width="2.6"/>
<polyline points="692.5,293.2 693.2,299.5"/>
<polyline points="700.8,295.8 703.2,288.2"/>
<polyline points="674.5,304.5 677,302" stroke-width="2.6"/>
<polyline points="710.8,308.2 712,315.8"/>
<polyline points="722,352 723.2,358.2"/>
<polyline points="771.8,219.5 774.2,220" stroke-width="2.6"/>
<polygon points="798,223.2 804.2,220.8 801.8,225.8" fill="#808080" stroke-width="1.2"/>
<polyline points="800.5,264.5 803.5,265" stroke-width="2.6"/>
<polyline points="850,266.5 852,268" stroke-width="2.6"/>
<polyline points="925.5,233.2 928,230.8" stroke-width="2.6"/>
<polyline points="936.8,248.2 940.5,250" stroke-width="2.6"/>
<polygon points="935.5,272 941.8,274.5 939.2,280.8 938,275.8" fill="#808080" stroke-width="1.2"/>
<polyline points="783,294.5 785,295.8" stroke-width="2.6"/>
<polygon points="813.8,292.8 816,292.8 816,297 813.8,297" fill="#808080" stroke-width="1.2"/>
<polyline points="828,304.5 826,309.5" stroke-width="2.6"/>
<polygon points="820,326.5 824.2,329.5 821,329.5" fill="#808080" stroke-width="1.2"/>
<polyline points="602,506.5 606.5,503.5" stroke-width="2.6"/>
<polyline points="708.2,550.2 710.8,559"/>
<polygon points="885.5,465.2 889.2,464.5 890.5,468.5 886.8,469"/>
<polygon points="109.2,672.2 112.5,668.5 114.5,671 111.2,673.5" fill="#808080" stroke-width="1.2"/>
<polygon points="499.8,728 502.2,729 501,734 499,733" fill="#808080" stroke-width="1.2"/>
<polygon points="265.2,630.5 268,630.5 268,633 265.2,633" fill="#808080" stroke-width="1.2"/>
<polygon points="523.2,691 528.2,691 525.8,701 523.2,699.8" fill="#808080" stroke-width="1.2"/>
<polygon points="535.8,697.2 538.2,698.5 537,712.2 533.2,709.8" fill="#808080" stroke-width="1.2"/>
<polyline points="562,719.8 563.2,723.5" stroke-width="2.6"/>
<polyline points="524.5,723.5 528.2,724.8" stroke-width="2.6"/>
<polygon points="535.8,727.2 539.5,733.5 535.8,734" fill="#808080" stroke-width="1.2"/>
<polyline points="559.5,741 560.8,747.2"/>
<polyline points="590.8,706 593.2,708" stroke-width="2.6"/>
<polygon points="599.5,707.2 603.2,703.5 609.5,703.5 609.5,708.5 603.2,711"/>
<polyline points="622,698.5 625.8,702.2" stroke-width="2.6"/>
<polyline points="643.2,699.8 647,696" stroke-width="2.6"/>
<polyline points="648.2,704.8 650.8,703.5" stroke-width="2.6"/>
<polyline points="659.5,709.8 664.5,713.5"/>
<polyline points="660.8,717.2 667,720.5"/>
<polygon points="668.2,712.2 674.5,701 675.8,703.5 670.8,714.8" fill="#808080" stroke-width="1.2"/>
<polygon points="685.8,703.5 688.2,702.2 687.8,712.2 686,711" fill="#808080" stroke-width="1.2"/>
<polyline points="677.8,732.2 678.8,737.2" stroke-width="2.6"/>
<polygon points="635.8,734.8 638.2,733.5 638.2,738.5 636.2,739.8" fill="#808080" stroke-width="1.2"/>
<polyline points="626.5,756.5 627,758.5" stroke-width="2.6"/>
<polyline points="738.2,589.8 740.8,588.5 739.5,597.2 747,601 742,599.8"/>
<polygon points="698.2,624.8 704.5,626 705.8,632.2 712,637.2 704.5,634.8" fill="#808080" stroke-width="1.2"/>
<polyline points="851.8,579.8 853,582.2" stroke-width="2.6"/>
<polygon points="864.2,704.8 871.8,702.2 870.5,711 866.8,716 868,721 870.5,726 864.2,723.5 861.8,718.5 863.5,711"/>
<polygon points="397.5,712.5 401.2,712.5 408.1,718.1 406.9,720.6 402.5,718.8 398.1,714.4" fill="#808080" stroke-width="1.2"/>
<polyline points="408.1,718.8 407.5,723.1 412.5,724.4 421.2,726.2 426.2,729.4 427.5,732.5 432.5,734.4 436.9,736.2 440,740 432.5,741.2 427.5,741.9"/>
<polygon points="432.5,740 440,739.8 438.8,741.9 433.1,742.2" fill="#808080" stroke-width="1.2"/>
<polygon points="391.2,721.2 395,718.8 398.8,721.9 395,723.8 392.5,723.1"/>
<polyline points="420,737.5 423.1,740.6" stroke-width="2.6"/>
<polyline points="346.5,757.8 347.8,762.5" stroke-width="2.6"/>
<polyline points="367.5,753.8 370.6,759.4" stroke-width="2.6"/>
<polyline points="374.1,752.5 376.5,756.9" stroke-width="2.6"/>
<polyline points="380.6,754 382.8,753.8" stroke-width="2.6"/>
<polyline points="384.4,765.6 391.9,765.6"/>
<polyline points="456.2,700 456.2,701.9" stroke-width="2.6"/>
<polyline points="514.2,100.4 519.2,98.5 521.8,96"/>
<polyline points="501.8,109.1 501.8,113.5 504.2,116 509.2,116.6 509.9,119.1"/>
<polyline points="504.2,116 503,121" stroke-width="2.6"/>
<polyline points="521.8,113.5 516.8,116.6 511.8,120.4 509.2,124.1 505.5,126.6 503,126.6"/>
<polyline points="509.2,124.5 515.5,124.5" stroke-width="2.6"/>
<polyline points="531.1,122.2 536.8,122.2 539.9,120.4"/>
<polyline points="558,99.1 555.5,103.5 550.5,107.2 548,109.8 543,112.9 539.9,116.6 540.5,121 544.2,126 546.1,121 548,114.8 549.2,111.6 555.5,107.9"/>
<polygon points="548,109.8 555.5,104.1 554.2,109.1" fill="#808080" stroke-width="1.2"/>
<polygon points="543,114.8 545.5,113.5 544.2,118.5" fill="#808080" stroke-width="1.2"/>
<polyline points="558,99.1 563,99.8 570.5,99.8 578,96.6 586.1,96.6 586.1,100.4 583.6,104.1"/>
<polygon points="578,96 586.1,96 586.1,99.8 583,99.1" fill="#808080" stroke-width="1.2"/>
<polyline points="549.9,136.6 545.5,139.8 543,144.8 543.6,151 543,154.8 546.8,156.6 550.5,156 548,153.5 546.1,149.8 545.5,143.5 548,139.1"/>
<polyline points="501.5,137.9 502.4,147.2" stroke-width="3"/>
<polygon points="508.6,152.2 511.8,154.8 514.2,151.6 513.6,161 511.8,162.2 510.5,157.2" fill="#808080" stroke-width="1.2"/>
<polyline points="586.8,140.4 590.5,139.1" stroke-width="2.6"/>
<polyline points="568,144.1 570.5,144.1" stroke-width="2.6"/>
<polyline points="574,151 574.2,153.5" stroke-width="2.6"/>
<polygon points="579.9,155.4 586.1,154.8 585.5,157.9" fill="#808080" stroke-width="1.2"/>
<polyline points="558,156.6 559.9,157.2" stroke-width="2.6"/>
<polygon points="594.2,149.8 596,149.8 596,156 594.2,156" fill="#808080" stroke-width="1.2"/>
<polygon points="594.5,164.8 596,164.8 596,177.2 594,174.8" fill="#808080" stroke-width="1.2"/>
<polyline points="742,2 748,6 756,9 766,11 769,8 770,1"/>
<polyline points="139,223.9 144.6,228.6 148.4,228.6 151.2,224.8 155.9,222.9"/>
<polyline points="155.9,223.9 158.7,232.3 159.6,239.8 163.4,242.6 168.1,242.2 169.9,247.3 174.6,250.1 178.4,255.8 181.2,261.4 179.3,265.1"/>
<polyline points="159.6,254.8 165.2,253.9 169,249.2 169.9,247.3"/>
<polyline points="181.2,228.6 187.8,232.3 193.4,231.4 194.3,234.2 189.6,240.8 187.8,247.3 189.6,252.9 193.4,256.7"/>
<polyline points="181.2,227.6 187.8,222.9 191.5,220.1" stroke-width="2.4"/>
<polyline points="184,217.3 185.9,220.1" stroke-width="2.4"/>
<polyline points="188.7,222 193.4,226.7" stroke-width="2.4"/>
<polyline points="197.1,214.1 199.4,215.4" stroke-width="3"/>
<polyline points="154.9,260.4 156.8,267 157.8,272.6 154.9,277.3 151.2,281.1 154,284.2 160.6,284.8 166.2,285.8 171.8,289.5 176.5,292.3 183.1,291.4 186.8,287.6 187.8,282 193.4,280.1 199,276.4 203.7,270.8 204.6,264.2 204.6,257.6 193.4,257.6 187.8,258.6 182.1,261.4 179.3,265.1"/>
<polyline points="166.2,286.7 171.8,290.4 176.5,293.2 183.1,292.3 186.8,288.6"/>
<polyline points="193.4,258 204.6,258.4" stroke-width="2.4"/>
<polyline points="176.5,267.9 169,272.6 163.4,277.3 160.6,281.1 161.5,284.8 169,285.8 174.6,288.6 180.2,289.5 184.9,286.7 186.8,282"/>
<polygon points="155.9,267 158.7,272.6 156.2,274.5" fill="#808080" stroke-width="1.2"/>
<polyline points="206.5,256.1 214,254.8 214.9,252"/>
<polyline points="92.8,326.6 93.8,331.2 90,333.1 84.4,335 82.5,338.8 86.2,340.6 90,338.8 93.8,337.8 95.6,334.1 102.2,337.8 108.8,341.6 114.4,344.4 112.5,348.1 106.9,350 101.2,348.1 95.6,346.2 90,344.4 84.4,342.5 75.9,343.4"/>
<polyline points="93.8,337.8 95.6,342.5 101.2,345.3 108.8,345.3"/>
<polyline points="102.2,337.8 107.8,343.4 111.6,344.4"/>
<polyline points="75.9,350 79.7,347.2 83.4,350"/>
<polyline points="58.1,366.9 57.2,362.2 61.9,358.4 68.4,356.6 75,356.6 82.5,355.6"/>
<polyline points="68.4,357.5 72.2,360.3 76.9,361.2 83.4,362.2"/>
<polyline points="71.2,364.1 75,365 78.8,362.2"/>
<polyline points="99.4,354.7 103.1,355.6 105,358.4"/>
<polyline points="90,364.6 94.7,364.6" stroke-width="2.6"/>
<polyline points="98.4,364.1 103.1,365" stroke-width="2.6"/>
<polyline points="75,373.4 78.8,376.2 83.4,376.2"/>
<polyline points="68.4,378.1 73.1,379.1 77.8,381.9 83.4,381.9 87.2,379.1 91.9,378.1"/>
<polyline points="93.8,379.1 97.5,380 102.2,380.9"/>
<polyline points="98.4,373.4 103.1,373.1" stroke-width="2.6"/>
<polyline points="99.4,376.2 103.1,375.9" stroke-width="2.6"/>
<polyline points="60,376.2 50.6,379.1 41.2,381.9 34.7,385.6 30,390.3"/>
<polyline points="105.9,380 106.9,384.7 110.6,388.4" stroke-width="2.4"/>
<polyline points="11.2,400.2 15,399.7" stroke-width="2.6"/>
<polyline points="138.9,305 138.9,301.9 142,300"/>
<polyline points="152.2,311.9 152.2,315" stroke-width="2.6"/>
<polyline points="155.8,318.1 158.2,318.1" stroke-width="2.6"/>
<polygon points="112,345.6 115.8,345.6 113.2,350" fill="#808080" stroke-width="1.2"/>
<polyline points="502,15 504.5,12.5 504.9,10 506.8,6.2 508,1.2"/>
<polyline points="506.8,14.6 508,11.2 510.5,6.2 511.8,1.5"/>
<polyline points="556.9,3.8 561.2,1.9 565,4.4 565.6,8.8 570,11.9 575,14.4 580,13.1 585,11.2 586.2,8.1 583.8,3.8 581.9,1.2"/>
<polygon points="557.5,3.5 561.2,2.8 564.4,5.6 562.5,6.2" fill="#808080" stroke-width="1.2"/>
<polyline points="568.1,11.9 573.8,12.5" stroke-width="2.4"/>
<polyline points="587.5,5.6 593.1,6.2 592.5,12.5 587.5,12.5 585,15 583.8,18.8 585.6,23.8 590,23.1 593.1,17.5 596.2,15.6 603.8,15.6 609.4,16.9 608.8,11.9 605,8.1 598.8,7.5 593.1,7.5"/>
<polyline points="586.2,1.2 585,3.8" stroke-width="2.6"/>
<polyline points="589.4,5 591.9,5.6" stroke-width="2.6"/>
<polygon points="577.5,18.8 581.2,17.5 582.5,20 578.8,20.6"/>
<polygon points="546.9,12.5 549.4,11.9 550,14.4 548.1,16.2 546.5,14.8"/>
<polygon points="468,17 472,16.6 474.2,18 477.4,21.2 479.2,19.4 480.5,20.6 481.4,23.8 484.2,22.5 486.8,24.4 487.7,27.2 483,27.5 481.4,29.4 479.2,29 475.5,25 471.8,21.2 469.2,18.8"/>
<polyline points="469.9,18 473.6,21.2 477.4,25 480.5,26.9"/>
<polygon points="483,23 486.5,24.5 487,27.3 483,27.3" fill="#808080" stroke-width="1.2"/>
<polyline points="491.5,19.8 493.3,21.2" stroke-width="2.6"/>
<polyline points="489.2,16 494.2,16.2" stroke-width="2.6"/>
</g>
<g class="l" stroke="#ff0000">
<polyline points="369,15.2 369,19 373.1,19.2 376.2,21.8 382.5,20.5 386.2,19.2 391.2,19.6 396.2,23.4 403.8,24.6 408.1,26.5 410.6,30.9 415,30.9 418.1,29.6"/>
<polyline points="433.1,27.8 438.8,29.6 447.5,30"/>
<polyline points="450.6,30.2 454.4,31.5 458.1,35.2"/>
<polyline points="710.4,124.8 712.9,123.8 712.2,128.5 714.1,133.5 717.2,138.5 716,143.5 717.2,152.2 717.9,163.5 721,169.8 722.9,177.2 724,188.5"/>
<polyline points="724,182.2 725.2,192"/>
<polyline points="245.5,157.5 251.1,159.4 256,165"/>
<polyline points="226.2,373.2 226.2,380.8"/>
<polyline points="245.6,157.8 250,159 255,163.8 261.2,168.1 267.5,171.2 268.8,176.9 271.2,181.9 275,185 280,185"/>
<polyline points="246.2,158.5 250.6,160 255.6,164.8 261.9,169 266.9,172.2 268.1,177.5 270.6,182.5 274.8,185.9 280,185.9"/>
<polyline points="285.6,186.2 285.6,190.6"/>
<polyline points="286,204.5 286,222 281,229.5 277.2,239.5 277.2,253.2 259.5,252 256.5,255 256.5,260 259,260.5 254.5,263 255.2,268.8 258.5,272 265,273 274.8,273.2 278,282 276,294.5"/>
<polyline points="272.2,299.5 266,304.5 259.8,305.8"/>
<polyline points="259.8,315.8 263,319.5 261,325.8 256,327"/>
<polyline points="725.8,192 722,202 720.8,212 709.5,220.8 707,233.2 717,240.8 727,252 737,259.5 737,267 732,275.8 733.2,287 739.5,292 742,302 744.5,309.5 743.2,319.5 739.5,329.5 735.8,335.8 739.5,344.5 744.5,352 743.2,362 749.5,367 757,369.5 759.5,379.5 760.8,384"/>
<polyline points="225.8,381 221.2,387.8 218.8,394 222.5,399 212.5,406.5 206.2,410.2 206.2,415.2 212.5,416.5 217.5,424 217.5,429"/>
<polyline points="202.5,404 200,411.5 198.8,417.8"/>
<polyline points="191.2,426.5 193.8,436.5 210,437.8"/>
<polyline points="220,442.8 223.8,449 228.8,450.2 227.5,456.5 223.8,459"/>
<polyline points="232.5,462.8 235,469 236.2,477.8 228.8,484 222.5,491.5 220,495.2 212.5,494 205,501.5 200,511.5 197.5,524 198.8,531.5 205,539 206.2,546.5 203.8,554 211.2,559 217.5,562.8 225,559 235,560.2 243.8,561.5 248.8,569 250,571.5"/>
<polyline points="220,495.2 220,504 225,514 230,521.5 240,526.5 245,531.5 243.8,539 237.5,546.5 235,554 235,561.5"/>
<polyline points="25,444 27.5,437.8 40,435.2 45,444 47.5,454 52.5,461.5 61.2,462.8 70,465.2 72.5,476.5 73.8,480.2 85,477.8 93.8,477.8 100,484 105,486.5 101.2,494 102.5,504 100,511.5 107.5,514 120,515.2 130,511.5 133.8,504 138.8,497.8 145,496.5 143.8,504 141.2,511.5 145,520.2 143.8,529 155,531.5 162.5,539 172.5,541.5 175,549 182.5,556.5 192.5,554 203.8,554"/>
<polyline points="642,462.8 648.2,462.8 653.2,455.2 662,450.2 669.5,449 672,442.8 677,441.5"/>
<polyline points="692,437.8 702,432.8 712,429 717,425.2 724.5,424 723.2,417.8 715.8,416.5 718.2,410.2 729.5,411.5 732,415.2 737,421.5 739.5,430.2 747,432.8 759.5,427.8 760.8,415.2 768,415.2"/>
<polyline points="747,432.8 752,424 758.2,410.2 760.8,396.5 762,384"/>
<polyline points="625.8,469 619.5,471.5 610.8,472.8 604.5,479 598.2,487.8 597,495.2 594.5,491.5 587,480.2 584.5,480.2 584.5,486.5 589.5,494 594.5,504 602,509 608.2,514 610.8,520.2 607,527.8 603.2,534 608.2,544 612,550.2 615.8,559 619.5,566.5 627,571.5 634.5,574 640.8,576"/>
<polyline points="768,415.2 773,414 778,419 778,426.5 783,434 793,436.5 808,440.2 813,445.2 820.5,445.2 821.8,451.5 828,449 834.2,450.2 839.2,447.8 844.2,450.2 848,455.2 843,462.8 836.8,465.2 833,470.2 836.8,475.2 843,476.5 850.5,484 855.5,494 860.5,500.2 865.5,500.2 870.5,492.8 878,489 883,487.8 883,482.8 876.8,476.5 874.2,470.2 878,469 888,471.5 894.2,475.2 899.2,480.2 904.2,485.2 909.2,486.5 918,484 925.5,480.2 926.8,489 919.2,495.2 923,500.2 928,504 933,510.2 938,512.8 943,506.5 946.8,509 955.5,512.8 961.8,517.8 968,517.8 976.8,520.2 979.2,529 983,536.5 990.5,541.5 994.2,554 1001.8,557.8 1003,566.5 1010.5,567.8 1016.8,565.2 1019.2,556.5 1022.5,554.8"/>
<polyline points="256,586 261,588.5 266,584.8 273.5,586"/>
<polyline points="276,593.5 286,593.5 293.5,589.8 301,587.2 306,593.5 313.5,599.8 323.5,599.8 338.5,603.5 348.5,607.2 342.2,617.2 336,626 331,629.8 327.2,637.2 322.2,643.5 321,653.5 317.2,663.5 316,673.5 312.2,681 308.5,688.5 308.5,701 306,716 304.8,726 308.5,729.8"/>
<polyline points="317.2,734.8 323.5,733.5 328.5,736 340,735"/>
<polyline points="459.8,752.2 469.8,752.2 471,759.8 476,757.2 481,751 484.8,743.5 482.2,736 484.8,733.5 496,736 506,738.5 512,739.8"/>
<polyline points="276,741 283.5,741 288.5,747.2 298.5,746 302.2,742.2 304.8,739.8"/>
<polyline points="264.8,754.8 276,754.8 273.5,759.8 268.5,763.5 268.5,768"/>
<polyline points="638.2,576 642,582.2 647,586"/>
<polyline points="655.8,594.8 662,599.8 664.5,606 670.8,608.5 677,613.5 684.5,621 689.5,623.5 688.2,638.5 684.5,646 682,649.8 674.5,644.8 667,643.5 665.8,649.8 665.8,658.5 662,664.8 654.5,668.5 644.5,671 634.5,674.8 628.2,679.8 623.2,686 627,693.5 634.5,701 639.5,711 634.5,719.8 642,721 643.2,728.5 642,738.5 638.2,743.5 632,739.8 625.8,734.8 625.8,727.2 622,724.8 612,727.2 607,724.8 599.5,723.5 592,719.8 590.8,723.5 590.8,731 569.5,731 554.5,733.5 549.5,739.8 542,742.2 535.8,748.5 529.5,748.5 524.5,748.5"/>
<polyline points="689.5,623.5 697,627.2 700.8,638.5 709.5,641 719.5,643.5 727,637.2 740.8,642.2 743.2,633.5 749.5,626 758.2,624.8 759.5,603.5 768,602.2"/>
<polyline points="768,602.5 775.5,604.5 785.5,606 793,612.2 803,616 813,617.2 820.5,623.5 828,627.2 843,628.5 848,622.2 855.5,622.2 863,627.2 875.5,629.8 878,641 875.5,651 871.8,659.8 875.5,668.5 880.5,678.5 886.8,684.8 888,692.2 895.5,693.5 903,698.5 910.5,706 918,712.2 928,718.5 943,717.2 960.5,719 975.5,717.2 985.5,716 989.2,712.2 994.2,712.2"/>
<polyline points="888,692.2 890.5,696 885.5,706 884.2,716 886.8,721 878,723.5 870.5,722.2 864.2,719.8 855.5,718 853,723.5 846.8,724.8 853,728.5 860.5,729.8 863.5,738.5 860.5,746 850.5,749 848,756 849.2,762.2 846.8,766"/>
<polyline points="340,736.2 341.2,732.5 346.2,730 351.2,731.2 353.1,733.8 364.4,733.8 365,731.2"/>
<polyline points="365,728.8 360.6,726.9 358.8,723.1 361.2,718.8 365,715.6 370,713.8 376.2,714.4 379.4,718.1"/>
<polygon points="371.2,714 376.2,714 377.5,716.9 371.9,716.2" fill="#ff0000" stroke-width="1.2"/>
<polyline points="381.2,724.4 380.6,721.9 383.8,720 386.9,721.9 387.5,726.2 390,728.1 393.8,726.9 397.5,724.4 401.2,724.4 405,726.2"/>
<polyline points="410,725.4 411.2,725.9"/>
<polyline points="420,731.2 425,734.4 428.8,737.5 438.8,736.9 441.2,733.1 445,732.5 446.2,735.6 450,737.5 454.4,737.5 454.4,740"/>
<polyline points="428.8,737.5 429.4,741.2 433.1,743.8 435.6,746.9 436.2,751.2 433.1,753.1 430.6,756.2 428.8,761.2 426.2,765.6 425,768"/>
<polyline points="430,763.8 430,766.2"/>
<polyline points="53.4,379.1 53.4,384.7 56.2,390.3 60,392.2 61.9,387.5 67.5,385.6 73.1,387.5 75.9,389.4"/>
<polyline points="91.3,392.2 97.5,389.4 102.2,385.6 105,381.9 106.9,379.1 118.1,379.1 118.1,380"/>
<polyline points="120,368.8 123.8,367.8 124.7,373.4 129.4,374.4 134.1,372.5 135.9,368.8 138.8,365.9 143.4,369.7 142.5,373.4 138.8,374.4 144.4,375.3 150,375.3 152.8,368.8 157.5,369.7 158.4,374.4 156.6,378.1 160.3,381.9 165.9,384.7 166.9,390.3 172.5,389.4 180,387.5 182.8,385.6 185.6,388.4 186.6,392.2"/>
<polyline points="188.4,394.1 192,395.9"/>
<polyline points="240,330.4 237,330.6 235.8,333.8 235.8,332.5 229.5,330 223.9,329.4 223.2,326.9 220.8,326.9 222.6,330 220.8,332.5 215.8,331.9 210.8,334.4 209.5,338.8 212,342.5 210.8,343.8 214.5,346.2 215.8,350 218.9,351.2 219.5,356.2 222,358.8"/>
<polyline points="240,330.4 250,328.2 256,327"/>
</g>
<g stroke="#808080" stroke-width="1" shape-rendering="crispEdges">
<path d="M147 115.5H158M152.5 110V121"/>
<path d="M451 115.5H462M456.5 110V121"/>
<path d="M754.5 115.5H765.5M760 110V121"/>
<path d="M451 317.5H462M456.5 312V323"/>
<path d="M754.5 317.5H765.5M760 312V323"/>
<path d="M147 511.5H158M152.5 506V517"/>
<path d="M451 511.5H462M456.5 506V517"/>
<path d="M754.5 511.5H765.5M760 506V517"/>
<path d="M147 696.5H158M152.5 691V702"/>
<path d="M451 696.5H462M456.5 691V702"/>
<path d="M754.5 696.5H765.5M760 691V702"/>
</g>
<defs><filter id="f" x="0" y="0" width="1024" height="768" filterUnits="userSpaceOnUse"><feOffset dx="0" dy="0"/></filter></defs>
<g filter="url(#f)">
<text class="g" x="147" y="27">5E</text>
<text class="g" x="447" y="27">10E</text>
<text class="g" x="751.5" y="27">15E</text>
<text class="g" x="8" y="119">54N</text>
<text class="g" x="8" y="321">52N</text>
<text class="g" x="8" y="515">50N</text>
<text class="g" x="8" y="700">48N</text>
<rect x="2" y="2" width="502" height="13" fill="#fff" shape-rendering="crispEdges"/>
<g class="t"><text x="2.5" y="13" textLength="25" lengthAdjust="spacingAndGlyphs">SAM</text> <text x="32.5" y="13" textLength="50" lengthAdjust="spacingAndGlyphs">01.03.08</text> <text x="86.5" y="13" textLength="31.5" lengthAdjust="spacingAndGlyphs">00:00</text> <text x="122.5" y="13" textLength="24" lengthAdjust="spacingAndGlyphs">UTC</text> <text x="155" y="13" textLength="133.5" lengthAdjust="spacingAndGlyphs">Bodenwettermeldungen</text> <text x="291.5" y="13">:</text> <text x="303.5" y="13" textLength="57.5" lengthAdjust="spacingAndGlyphs">Max.Mittel</text> <text x="365.5" y="13" textLength="36" lengthAdjust="spacingAndGlyphs">(letzte</text> <text x="405" y="13">6</text> <text x="415.5" y="13" textLength="50" lengthAdjust="spacingAndGlyphs">Stunden)</text> <text x="471.5" y="13">/</text> <text x="480.5" y="13" textLength="23" lengthAdjust="spacingAndGlyphs">kmh</text> </g>
<rect x="129" y="20.5" width="15" height="12.5" fill="#000"/><text class="n" x="129.7" y="31" fill="#ff0080" textLength="13.1" lengthAdjust="spacingAndGlyphs">65</text>
<rect x="227" y="92.5" width="15" height="12.5" fill="#000"/><text class="n" x="227.7" y="103" fill="#ff0080" style="font-weight:normal" stroke="#ff0080" stroke-width=".35" textLength="13.1" lengthAdjust="spacingAndGlyphs">72</text>
<rect x="230" y="154.5" width="15" height="12.5" fill="#000"/><text class="n" x="230.7" y="165" fill="#ff0080" style="font-weight:normal" stroke="#ff0080" stroke-width=".35" textLength="13.1" lengthAdjust="spacingAndGlyphs">72</text>
<rect x="218" y="169.5" width="15" height="12.5" fill="#000"/><text class="n" x="218.7" y="180" fill="#ffff00" textLength="13.1" lengthAdjust="spacingAndGlyphs">57</text>
<rect x="165" y="173.5" width="15" height="12.5" fill="#000"/><text class="n" x="165.7" y="184" fill="#ff0080" style="font-weight:normal" stroke="#ff0080" stroke-width=".35" textLength="13.1" lengthAdjust="spacingAndGlyphs">69</text>
<rect x="140" y="187" width="15" height="12.5" fill="#000"/><text class="n" x="140.7" y="197.5" fill="#ff0080" style="font-weight:normal" stroke="#ff0080" stroke-width=".35" textLength="13.1" lengthAdjust="spacingAndGlyphs">76</text>
<rect x="385" y="26.5" width="15" height="12.5" fill="#000"/><text class="n" x="385.7" y="37" fill="#ffff00" textLength="13.1" lengthAdjust="spacingAndGlyphs">54</text>
<rect x="418" y="22.5" width="15" height="12.5" fill="#000"/><text class="n" x="418.7" y="33" fill="#ffff00" textLength="13.1" lengthAdjust="spacingAndGlyphs">50</text>
<rect x="451" y="40.5" width="15" height="12.5" fill="#000"/><text class="n" x="451.7" y="51" fill="#ffff00" textLength="13.1" lengthAdjust="spacingAndGlyphs">46</text>
<rect x="465" y="57.5" width="15" height="12.5" fill="#000"/><text class="n" x="465.7" y="68" fill="#ff0080" style="font-weight:normal" stroke="#ff0080" stroke-width=".35" textLength="13.1" lengthAdjust="spacingAndGlyphs">69</text>
<rect x="419" y="61.5" width="15" height="12.5" fill="#000"/><text class="n" x="419.7" y="72" fill="#ffff00" textLength="13.1" lengthAdjust="spacingAndGlyphs">54</text>
<rect x="364" y="75.5" width="15" height="12.5" fill="#000"/><text class="n" x="364.7" y="86" fill="#ff0080" style="font-weight:normal" stroke="#ff0080" stroke-width=".35" textLength="13.1" lengthAdjust="spacingAndGlyphs">72</text>
<rect x="293" y="90.5" width="15" height="12.5" fill="#000"/><text class="n" x="293.7" y="101" fill="#ff0080" style="font-weight:normal" stroke="#ff0080" stroke-width=".35" textLength="13.1" lengthAdjust="spacingAndGlyphs">69</text>
<rect x="321" y="90.5" width="15" height="12.5" fill="#000"/><text class="n" x="321.7" y="101" fill="#ff0080" style="font-weight:normal" stroke="#ff0080" stroke-width=".35" textLength="13.1" lengthAdjust="spacingAndGlyphs">72</text>
<rect x="389" y="102.5" width="15" height="12.5" fill="#000"/><text class="n" x="389.7" y="113" fill="#ffff00" textLength="13.1" lengthAdjust="spacingAndGlyphs">57</text>
<rect x="335" y="123.5" width="15" height="12.5" fill="#000"/><text class="n" x="335.7" y="134" fill="#ff0080" style="font-weight:normal" stroke="#ff0080" stroke-width=".35" textLength="13.1" lengthAdjust="spacingAndGlyphs">83</text>
<rect x="370" y="123.5" width="15" height="12.5" fill="#000"/><text class="n" x="370.7" y="134" fill="#ffff00" textLength="13.1" lengthAdjust="spacingAndGlyphs">43</text>
<rect x="368" y="133.5" width="15" height="12.5" fill="#000"/><text class="n" x="368.7" y="144" fill="#ffff00" textLength="13.1" lengthAdjust="spacingAndGlyphs">46</text>
<rect x="276" y="138.5" width="15" height="12.5" fill="#000"/><text class="n" x="276.7" y="149" fill="#ffff00" textLength="13.1" lengthAdjust="spacingAndGlyphs">50</text>
<rect x="307.5" y="156.5" width="15" height="12.5" fill="#000"/><text class="n" x="308.2" y="167" fill="#00ffff" textLength="13.1" lengthAdjust="spacingAndGlyphs">39</text>
<rect x="363" y="157.5" width="15" height="12.5" fill="#000"/><text class="n" x="363.7" y="168" fill="#ffff00" textLength="13.1" lengthAdjust="spacingAndGlyphs">61</text>
<rect x="398" y="161.5" width="15" height="12.5" fill="#000"/><text class="n" x="398.7" y="172" fill="#ffff00" textLength="13.1" lengthAdjust="spacingAndGlyphs">46</text>
<rect x="448" y="147.5" width="15" height="12.5" fill="#000"/><text class="n" x="448.7" y="158" fill="#00ffff" textLength="13.1" lengthAdjust="spacingAndGlyphs">39</text>
<rect x="281" y="173.5" width="15" height="12.5" fill="#000"/><text class="n" x="281.7" y="184" fill="#ffff00" textLength="13.1" lengthAdjust="spacingAndGlyphs">43</text>
<rect x="503" y="102" width="15" height="12.5" fill="#000"/><text class="n" x="503.7" y="112.5" fill="#ffff00" textLength="13.1" lengthAdjust="spacingAndGlyphs">46</text>
<rect x="658" y="38.5" width="15" height="12.5" fill="#000"/><text class="n" x="658.7" y="49" fill="#00ffff" textLength="13.1" lengthAdjust="spacingAndGlyphs">39</text>
<rect x="687" y="83.5" width="15" height="12.5" fill="#000"/><text class="n" x="687.7" y="94" fill="#00ffff" textLength="13.1" lengthAdjust="spacingAndGlyphs">39</text>
<rect x="611" y="159.5" width="15" height="12.5" fill="#000"/><text class="n" x="611.7" y="170" fill="#00ffff" textLength="13.1" lengthAdjust="spacingAndGlyphs">39</text>
<rect x="522" y="109.5" width="15" height="12.5" fill="#000"/><text class="n" x="522.7" y="120" fill="#ffff00" textLength="13.1" lengthAdjust="spacingAndGlyphs">43</text>
<rect x="37" y="190.5" width="15" height="12.5" fill="#000"/><text class="n" x="37.7" y="201" fill="#ff0080" style="font-weight:normal" stroke="#ff0080" stroke-width=".35" textLength="13.1" lengthAdjust="spacingAndGlyphs">69</text>
<rect x="192" y="190.5" width="15" height="12.5" fill="#000"/><text class="n" x="192.7" y="201" fill="#ffff00" textLength="13.1" lengthAdjust="spacingAndGlyphs">57</text>
<rect x="241" y="198.5" width="15" height="12.5" fill="#000"/><text class="n" x="241.7" y="209" fill="#ffff00" textLength="13.1" lengthAdjust="spacingAndGlyphs">57</text>
<rect x="128" y="211.5" width="15" height="12.5" fill="#000"/><text class="n" x="128.7" y="222" fill="#ff0080" style="font-weight:normal" stroke="#ff0080" stroke-width=".35" textLength="13.1" lengthAdjust="spacingAndGlyphs">69</text>
<rect x="166" y="223.5" width="15" height="12.5" fill="#000"/><text class="n" x="166.7" y="234" fill="#ff0080" textLength="13.1" lengthAdjust="spacingAndGlyphs">65</text>
<rect x="199" y="242.5" width="15" height="12.5" fill="#000"/><text class="n" x="199.7" y="253" fill="#ffff00" textLength="13.1" lengthAdjust="spacingAndGlyphs">46</text>
<rect x="237" y="238.5" width="15" height="12.5" fill="#000"/><text class="n" x="237.7" y="249" fill="#ffff00" textLength="13.1" lengthAdjust="spacingAndGlyphs">46</text>
<rect x="144" y="247.5" width="15" height="12.5" fill="#000"/><text class="n" x="144.7" y="258" fill="#ffff00" textLength="13.1" lengthAdjust="spacingAndGlyphs">61</text>
<rect x="120" y="265.5" width="15" height="12.5" fill="#000"/><text class="n" x="120.7" y="276" fill="#ff0080" style="font-weight:normal" stroke="#ff0080" stroke-width=".35" textLength="13.1" lengthAdjust="spacingAndGlyphs">72</text>
<rect x="177" y="267.5" width="15" height="12.5" fill="#000"/><text class="n" x="177.7" y="278" fill="#ffff00" textLength="13.1" lengthAdjust="spacingAndGlyphs">54</text>
<rect x="222" y="268.5" width="15" height="12.5" fill="#000"/><text class="n" x="222.7" y="279" fill="#ffff00" textLength="13.1" lengthAdjust="spacingAndGlyphs">43</text>
<rect x="131" y="282.5" width="15" height="12.5" fill="#000"/><text class="n" x="131.7" y="293" fill="#ffff00" textLength="13.1" lengthAdjust="spacingAndGlyphs">61</text>
<rect x="110" y="293.5" width="15" height="12.5" fill="#000"/><text class="n" x="110.7" y="304" fill="#ffff00" textLength="13.1" lengthAdjust="spacingAndGlyphs">54</text>
<rect x="162" y="298.5" width="15" height="12.5" fill="#000"/><text class="n" x="162.7" y="309" fill="#ffff00" textLength="13.1" lengthAdjust="spacingAndGlyphs">46</text>
<rect x="199" y="305.5" width="15" height="12.5" fill="#000"/><text class="n" x="199.7" y="316" fill="#ffff00" textLength="13.1" lengthAdjust="spacingAndGlyphs">46</text>
<rect x="245" y="305.5" width="15" height="12.5" fill="#000"/><text class="n" x="245.7" y="316" fill="#ffff00" textLength="13.1" lengthAdjust="spacingAndGlyphs">43</text>
<rect x="41" y="311.5" width="15" height="12.5" fill="#000"/><text class="n" x="41.7" y="322" fill="#ff0080" style="font-weight:normal" stroke="#ff0080" stroke-width=".35" textLength="13.1" lengthAdjust="spacingAndGlyphs">72</text>
<rect x="64" y="318.5" width="15" height="12.5" fill="#000"/><text class="n" x="64.7" y="329" fill="#ff0080" style="font-weight:normal" stroke="#ff0080" stroke-width=".35" textLength="13.1" lengthAdjust="spacingAndGlyphs">76</text>
<rect x="90" y="313.5" width="15" height="12.5" fill="#000"/><text class="n" x="90.7" y="324" fill="#ffff00" textLength="13.1" lengthAdjust="spacingAndGlyphs">61</text>
<rect x="103" y="323.5" width="15" height="12.5" fill="#000"/><text class="n" x="103.7" y="334" fill="#ffff00" textLength="13.1" lengthAdjust="spacingAndGlyphs">61</text>
<rect x="141" y="315.5" width="15" height="12.5" fill="#000"/><text class="n" x="141.7" y="326" fill="#ffff00" textLength="13.1" lengthAdjust="spacingAndGlyphs">61</text>
<rect x="60" y="342.5" width="15" height="12.5" fill="#000"/><text class="n" x="60.7" y="353" fill="#ff0080" style="font-weight:normal" stroke="#ff0080" stroke-width=".35" textLength="13.1" lengthAdjust="spacingAndGlyphs">72</text>
<rect x="84" y="351.5" width="15" height="12.5" fill="#000"/><text class="n" x="84.7" y="362" fill="#ff0080" style="font-weight:normal" stroke="#ff0080" stroke-width=".35" textLength="13.1" lengthAdjust="spacingAndGlyphs">69</text>
<rect x="141" y="354.5" width="15" height="12.5" fill="#000"/><text class="n" x="141.7" y="365" fill="#00ffff" textLength="13.1" lengthAdjust="spacingAndGlyphs">39</text>
<rect x="188" y="346.5" width="15" height="12.5" fill="#000"/><text class="n" x="188.7" y="357" fill="#ffff00" textLength="13.1" lengthAdjust="spacingAndGlyphs">50</text>
<rect x="218" y="360.5" width="15" height="12.5" fill="#000"/><text class="n" x="218.7" y="371" fill="#00ffff" textLength="13.1" lengthAdjust="spacingAndGlyphs">39</text>
<rect x="39" y="360.5" width="15" height="12.5" fill="#000"/><text class="n" x="39.7" y="371" fill="#ff0080" style="font-weight:normal" stroke="#ff0080" stroke-width=".35" textLength="13.1" lengthAdjust="spacingAndGlyphs">76</text>
<rect x="60" y="365.5" width="15" height="12.5" fill="#000"/><text class="n" x="60.7" y="376" fill="#ff0080" style="font-weight:normal" stroke="#ff0080" stroke-width=".35" textLength="13.1" lengthAdjust="spacingAndGlyphs">76</text>
<rect x="84" y="365.5" width="15" height="12.5" fill="#000"/><text class="n" x="84.7" y="376" fill="#ff0080" textLength="13.1" lengthAdjust="spacingAndGlyphs">65</text>
<rect x="104" y="365.5" width="15" height="12.5" fill="#000"/><text class="n" x="104.7" y="376" fill="#ffff00" textLength="13.1" lengthAdjust="spacingAndGlyphs">43</text>
<rect x="170" y="365.5" width="15" height="12.5" fill="#000"/><text class="n" x="170.7" y="376" fill="#ffff00" textLength="13.1" lengthAdjust="spacingAndGlyphs">43</text>
<rect x="276" y="191.5" width="15" height="12.5" fill="#000"/><text class="n" x="276.7" y="202" fill="#ffff00" textLength="13.1" lengthAdjust="spacingAndGlyphs">61</text>
<rect x="376" y="206.5" width="15" height="12.5" fill="#000"/><text class="n" x="376.7" y="217" fill="#ffff00" textLength="13.1" lengthAdjust="spacingAndGlyphs">50</text>
<rect x="349" y="253.5" width="15" height="12.5" fill="#000"/><text class="n" x="349.7" y="264" fill="#ffff00" textLength="13.1" lengthAdjust="spacingAndGlyphs">46</text>
<rect x="260" y="285.5" width="15" height="12.5" fill="#000"/><text class="n" x="260.7" y="296" fill="#ffff00" textLength="13.1" lengthAdjust="spacingAndGlyphs">43</text>
<rect x="330" y="287.5" width="15" height="12.5" fill="#000"/><text class="n" x="330.7" y="298" fill="#00ffff" textLength="13.1" lengthAdjust="spacingAndGlyphs">39</text>
<rect x="393" y="283.5" width="15" height="12.5" fill="#000"/><text class="n" x="393.7" y="294" fill="#ffff00" textLength="13.1" lengthAdjust="spacingAndGlyphs">43</text>
<rect x="309" y="298.5" width="15" height="12.5" fill="#000"/><text class="n" x="309.7" y="309" fill="#ffff00" textLength="13.1" lengthAdjust="spacingAndGlyphs">46</text>
<rect x="482" y="331.5" width="22" height="12.5" fill="#000"/><text class="n" x="482.7" y="342" fill="#ff0000" textLength="19.6" lengthAdjust="spacingAndGlyphs">104</text>
<rect x="320" y="352.5" width="15" height="12.5" fill="#000"/><text class="n" x="320.7" y="363" fill="#ffff00" textLength="13.1" lengthAdjust="spacingAndGlyphs">43</text>
<rect x="395" y="360.5" width="15" height="12.5" fill="#000"/><text class="n" x="395.7" y="371" fill="#00ffff" textLength="13.1" lengthAdjust="spacingAndGlyphs">39</text>
<rect x="468" y="370.5" width="15" height="12.5" fill="#000"/><text class="n" x="468.7" y="381" fill="#00ffff" textLength="13.1" lengthAdjust="spacingAndGlyphs">39</text>
<rect x="518" y="346.5" width="15" height="12.5" fill="#000"/><text class="n" x="518.7" y="357" fill="#00ffff" textLength="13.1" lengthAdjust="spacingAndGlyphs">39</text>
<rect x="15" y="390.5" width="15" height="12.5" fill="#000"/><text class="n" x="15.7" y="401" fill="#ff0080" textLength="13.1" lengthAdjust="spacingAndGlyphs">65</text>
<rect x="2" y="401.5" width="15" height="12.5" fill="#000"/><text class="n" x="2.7" y="412" fill="#ff0080" style="font-weight:normal" stroke="#ff0080" stroke-width=".35" textLength="13.1" lengthAdjust="spacingAndGlyphs">69</text>
<rect x="75.5" y="386.5" width="15" height="12.5" fill="#000"/><text class="n" x="76.2" y="397" fill="#ffff00" textLength="13.1" lengthAdjust="spacingAndGlyphs">57</text>
<rect x="113" y="390.5" width="15" height="12.5" fill="#000"/><text class="n" x="113.7" y="401" fill="#ffff00" textLength="13.1" lengthAdjust="spacingAndGlyphs">43</text>
<rect x="173" y="393.5" width="15" height="12.5" fill="#000"/><text class="n" x="173.7" y="404" fill="#ffff00" textLength="13.1" lengthAdjust="spacingAndGlyphs">50</text>
<rect x="192" y="390.5" width="15" height="12.5" fill="#000"/><text class="n" x="192.7" y="401" fill="#ffff00" textLength="13.1" lengthAdjust="spacingAndGlyphs">46</text>
<rect x="64" y="415.5" width="15" height="12.5" fill="#000"/><text class="n" x="64.7" y="426" fill="#ffff00" textLength="13.1" lengthAdjust="spacingAndGlyphs">43</text>
<rect x="117" y="419.5" width="15" height="12.5" fill="#000"/><text class="n" x="117.7" y="430" fill="#ffff00" textLength="13.1" lengthAdjust="spacingAndGlyphs">54</text>
<rect x="131" y="433.5" width="15" height="12.5" fill="#000"/><text class="n" x="131.7" y="444" fill="#ffff00" textLength="13.1" lengthAdjust="spacingAndGlyphs">54</text>
<rect x="193" y="417.5" width="15" height="12.5" fill="#000"/><text class="n" x="193.7" y="428" fill="#ffff00" textLength="13.1" lengthAdjust="spacingAndGlyphs">50</text>
<rect x="212" y="430.5" width="15" height="12.5" fill="#000"/><text class="n" x="212.7" y="441" fill="#ffff00" textLength="13.1" lengthAdjust="spacingAndGlyphs">50</text>
<rect x="246" y="425.5" width="15" height="12.5" fill="#000"/><text class="n" x="246.7" y="436" fill="#00ffff" textLength="13.1" lengthAdjust="spacingAndGlyphs">39</text>
<rect x="172" y="443.5" width="15" height="12.5" fill="#000"/><text class="n" x="172.7" y="454" fill="#ffff00" textLength="13.1" lengthAdjust="spacingAndGlyphs">54</text>
<rect x="201" y="459.5" width="15" height="12.5" fill="#000"/><text class="n" x="201.7" y="470" fill="#ffff00" textLength="13.1" lengthAdjust="spacingAndGlyphs">43</text>
<rect x="217" y="460.5" width="15" height="12.5" fill="#000"/><text class="n" x="217.7" y="471" fill="#ffff00" textLength="13.1" lengthAdjust="spacingAndGlyphs">43</text>
<rect x="112" y="460.5" width="15" height="12.5" fill="#000"/><text class="n" x="112.7" y="471" fill="#ffff00" textLength="13.1" lengthAdjust="spacingAndGlyphs">54</text>
<rect x="124" y="482.5" width="15" height="12.5" fill="#000"/><text class="n" x="124.7" y="493" fill="#ffff00" textLength="13.1" lengthAdjust="spacingAndGlyphs">46</text>
<rect x="169" y="501.5" width="15" height="12.5" fill="#000"/><text class="n" x="169.7" y="512" fill="#00ffff" textLength="13.1" lengthAdjust="spacingAndGlyphs">35</text>
<rect x="246" y="528.5" width="15" height="12.5" fill="#000"/><text class="n" x="246.7" y="539" fill="#ffff00" textLength="13.1" lengthAdjust="spacingAndGlyphs">46</text>
<rect x="252" y="380.5" width="15" height="12.5" fill="#000"/><text class="n" x="252.7" y="391" fill="#ffff00" textLength="13.1" lengthAdjust="spacingAndGlyphs">50</text>
<rect x="306" y="385.5" width="15" height="12.5" fill="#000"/><text class="n" x="306.7" y="396" fill="#ffff00" textLength="13.1" lengthAdjust="spacingAndGlyphs">43</text>
<rect x="357" y="391.5" width="15" height="12.5" fill="#000"/><text class="n" x="357.7" y="402" fill="#ffff00" textLength="13.1" lengthAdjust="spacingAndGlyphs">57</text>
<rect x="370" y="449.5" width="15" height="12.5" fill="#000"/><text class="n" x="370.7" y="460" fill="#00ffff" textLength="13.1" lengthAdjust="spacingAndGlyphs">39</text>
<rect x="446" y="457.5" width="15" height="12.5" fill="#000"/><text class="n" x="446.7" y="468" fill="#ff0080" style="font-weight:normal" stroke="#ff0080" stroke-width=".35" textLength="13.1" lengthAdjust="spacingAndGlyphs">72</text>
<rect x="494.5" y="443.5" width="15" height="12.5" fill="#000"/><text class="n" x="495.2" y="454" fill="#ffff00" textLength="13.1" lengthAdjust="spacingAndGlyphs">50</text>
<rect x="258" y="471.5" width="15" height="12.5" fill="#000"/><text class="n" x="258.7" y="482" fill="#ffff00" textLength="13.1" lengthAdjust="spacingAndGlyphs">43</text>
<rect x="271" y="489.5" width="15" height="12.5" fill="#000"/><text class="n" x="271.7" y="500" fill="#00ffff" textLength="13.1" lengthAdjust="spacingAndGlyphs">39</text>
<rect x="364" y="500.5" width="15" height="12.5" fill="#000"/><text class="n" x="364.7" y="511" fill="#ffff00" textLength="13.1" lengthAdjust="spacingAndGlyphs">43</text>
<rect x="447" y="527.5" width="15" height="12.5" fill="#000"/><text class="n" x="447.7" y="538" fill="#ffff00" textLength="13.1" lengthAdjust="spacingAndGlyphs">50</text>
<rect x="287" y="533.5" width="15" height="12.5" fill="#000"/><text class="n" x="287.7" y="544" fill="#00ffff" textLength="13.1" lengthAdjust="spacingAndGlyphs">39</text>
<rect x="270" y="553.5" width="15" height="12.5" fill="#000"/><text class="n" x="270.7" y="564" fill="#ffff00" textLength="13.1" lengthAdjust="spacingAndGlyphs">54</text>
<rect x="334" y="562.5" width="15" height="12.5" fill="#000"/><text class="n" x="334.7" y="573" fill="#ff0080" style="font-weight:normal" stroke="#ff0080" stroke-width=".35" textLength="13.1" lengthAdjust="spacingAndGlyphs">83</text>
<rect x="370" y="559.5" width="15" height="12.5" fill="#000"/><text class="n" x="370.7" y="570" fill="#ffff00" textLength="13.1" lengthAdjust="spacingAndGlyphs">46</text>
<rect x="447" y="561.5" width="15" height="12.5" fill="#000"/><text class="n" x="447.7" y="572" fill="#ff0080" textLength="13.1" lengthAdjust="spacingAndGlyphs">65</text>
<rect x="508" y="411.5" width="15" height="12.5" fill="#000"/><text class="n" x="508.7" y="422" fill="#ffff00" textLength="13.1" lengthAdjust="spacingAndGlyphs">46</text>
<rect x="518" y="457.5" width="15" height="12.5" fill="#000"/><text class="n" x="518.7" y="468" fill="#ffff00" textLength="13.1" lengthAdjust="spacingAndGlyphs">50</text>
<rect x="509" y="478.5" width="15" height="12.5" fill="#000"/><text class="n" x="509.7" y="489" fill="#00ffff" textLength="13.1" lengthAdjust="spacingAndGlyphs">39</text>
<rect x="559" y="451.5" width="15" height="12.5" fill="#000"/><text class="n" x="559.7" y="462" fill="#ffff00" textLength="13.1" lengthAdjust="spacingAndGlyphs">43</text>
<rect x="623" y="428.5" width="15" height="12.5" fill="#000"/><text class="n" x="623.7" y="439" fill="#00ffff" textLength="13.1" lengthAdjust="spacingAndGlyphs">39</text>
<rect x="677" y="435.5" width="15" height="12.5" fill="#000"/><text class="n" x="677.7" y="446" fill="#ffff00" textLength="13.1" lengthAdjust="spacingAndGlyphs">43</text>
<rect x="628" y="463.5" width="15" height="12.5" fill="#000"/><text class="n" x="628.7" y="474" fill="#ff0080" style="font-weight:normal" stroke="#ff0080" stroke-width=".35" textLength="13.1" lengthAdjust="spacingAndGlyphs">83</text>
<rect x="513" y="552.5" width="15" height="12.5" fill="#000"/><text class="n" x="513.7" y="563" fill="#ffff00" textLength="13.1" lengthAdjust="spacingAndGlyphs">43</text>
<rect x="247" y="572.5" width="15" height="12.5" fill="#000"/><text class="n" x="247.7" y="583" fill="#ffff00" textLength="13.1" lengthAdjust="spacingAndGlyphs">54</text>
<rect x="274" y="578.5" width="15" height="12.5" fill="#000"/><text class="n" x="274.7" y="589" fill="#ffff00" textLength="13.1" lengthAdjust="spacingAndGlyphs">50</text>
<rect x="419" y="578.5" width="15" height="12.5" fill="#000"/><text class="n" x="419.7" y="589" fill="#00ffff" textLength="13.1" lengthAdjust="spacingAndGlyphs">39</text>
<rect x="491" y="618.5" width="15" height="12.5" fill="#000"/><text class="n" x="491.7" y="629" fill="#ffff00" textLength="13.1" lengthAdjust="spacingAndGlyphs">43</text>
<rect x="353" y="649.5" width="15" height="12.5" fill="#000"/><text class="n" x="353.7" y="660" fill="#00ffff" textLength="13.1" lengthAdjust="spacingAndGlyphs">39</text>
<rect x="444" y="670.5" width="15" height="12.5" fill="#000"/><text class="n" x="444.7" y="681" fill="#ffff00" textLength="13.1" lengthAdjust="spacingAndGlyphs">46</text>
<rect x="506" y="650.5" width="15" height="12.5" fill="#000"/><text class="n" x="506.7" y="661" fill="#ffff00" textLength="13.1" lengthAdjust="spacingAndGlyphs">46</text>
<rect x="502" y="673.5" width="15" height="12.5" fill="#000"/><text class="n" x="502.7" y="684" fill="#ffff00" textLength="13.1" lengthAdjust="spacingAndGlyphs">43</text>
<rect x="504" y="684.5" width="15" height="12.5" fill="#000"/><text class="n" x="504.7" y="695" fill="#ffff00" textLength="13.1" lengthAdjust="spacingAndGlyphs">50</text>
<rect x="318" y="690.5" width="15" height="12.5" fill="#000"/><text class="n" x="318.7" y="701" fill="#ffff00" textLength="13.1" lengthAdjust="spacingAndGlyphs">43</text>
<rect x="327" y="700.5" width="15" height="12.5" fill="#000"/><text class="n" x="327.7" y="711" fill="#ff0000" style="font-weight:normal" stroke="#ff0000" stroke-width=".35" textLength="13.1" lengthAdjust="spacingAndGlyphs">96</text>
<rect x="365" y="719.5" width="15" height="12.5" fill="#000"/><text class="n" x="365.7" y="730" fill="#ffff00" textLength="13.1" lengthAdjust="spacingAndGlyphs">41</text>
<rect x="405" y="726.5" width="15" height="12.5" fill="#000"/><text class="n" x="405.7" y="737" fill="#00ff00" textLength="13.1" lengthAdjust="spacingAndGlyphs">28</text>
<rect x="302" y="731.5" width="15" height="12.5" fill="#000"/><text class="n" x="302.7" y="742" fill="#00ffff" textLength="13.1" lengthAdjust="spacingAndGlyphs">31</text>
<rect x="352" y="737.5" width="15" height="12.5" fill="#000"/><text class="n" x="352.7" y="748" fill="#ffff00" textLength="13.1" lengthAdjust="spacingAndGlyphs">44</text>
<rect x="385" y="747.5" width="15" height="12.5" fill="#000"/><text class="n" x="385.7" y="758" fill="#ff0080" textLength="13.1" lengthAdjust="spacingAndGlyphs">63</text>
<rect x="382" y="737.5" width="15" height="12.5" fill="#000"/><text class="n" x="382.7" y="748" fill="#00ffff" textLength="13.1" lengthAdjust="spacingAndGlyphs">30</text>
<rect x="412" y="741.5" width="15" height="12.5" fill="#000"/><text class="n" x="412.7" y="752" fill="#00ff00" textLength="13.1" lengthAdjust="spacingAndGlyphs">26</text>
<rect x="455" y="738.5" width="15" height="12.5" fill="#000"/><text class="n" x="455.7" y="749" fill="#00ffff" textLength="13.1" lengthAdjust="spacingAndGlyphs">39</text>
<rect x="263" y="741.5" width="15" height="12.5" fill="#000"/><text class="n" x="263.7" y="752" fill="#00ffff" textLength="13.1" lengthAdjust="spacingAndGlyphs">35</text>
<rect x="320" y="741.5" width="15" height="12.5" fill="#000"/><text class="n" x="320.7" y="752" fill="#ffff00" textLength="13.1" lengthAdjust="spacingAndGlyphs">41</text>
<rect x="314" y="758.5" width="15" height="12.5" fill="#000"/><text class="n" x="314.7" y="769" fill="#00ff00" textLength="13.1" lengthAdjust="spacingAndGlyphs">24</text>
<rect x="369" y="761.5" width="15" height="12.5" fill="#000"/><text class="n" x="369.7" y="772" fill="#00ff00" textLength="13.1" lengthAdjust="spacingAndGlyphs">22</text>
<rect x="409" y="758.5" width="15" height="12.5" fill="#000"/><text class="n" x="409.7" y="769" fill="#ff0080" textLength="13.1" lengthAdjust="spacingAndGlyphs">81</text>
<rect x="639" y="587.5" width="15" height="12.5" fill="#000"/><text class="n" x="639.7" y="598" fill="#ff0080" style="font-weight:normal" stroke="#ff0080" stroke-width=".35" textLength="13.1" lengthAdjust="spacingAndGlyphs">76</text>
<rect x="558" y="656.5" width="15" height="12.5" fill="#000"/><text class="n" x="558.7" y="667" fill="#ffff00" textLength="13.1" lengthAdjust="spacingAndGlyphs">46</text>
<rect x="543" y="675.5" width="15" height="12.5" fill="#000"/><text class="n" x="543.7" y="686" fill="#ffff00" textLength="13.1" lengthAdjust="spacingAndGlyphs">43</text>
<rect x="703" y="669.5" width="15" height="12.5" fill="#000"/><text class="n" x="703.7" y="680" fill="#00ffff" textLength="13.1" lengthAdjust="spacingAndGlyphs">31</text>
<rect x="571" y="717.5" width="15" height="12.5" fill="#000"/><text class="n" x="571.7" y="728" fill="#ff0080" style="font-weight:normal" stroke="#ff0080" stroke-width=".35" textLength="13.1" lengthAdjust="spacingAndGlyphs">83</text>
<rect x="511" y="708.5" width="15" height="12.5" fill="#000"/><text class="n" x="511.7" y="719" fill="#ff0080" style="font-weight:normal" stroke="#ff0080" stroke-width=".35" textLength="13.1" lengthAdjust="spacingAndGlyphs">83</text>
<rect x="509" y="743.5" width="15" height="12.5" fill="#000"/><text class="n" x="509.7" y="754" fill="#ff0000" style="font-weight:normal" stroke="#ff0000" stroke-width=".35" textLength="13.1" lengthAdjust="spacingAndGlyphs">96</text>
</g>
</svg>
</body></html>
